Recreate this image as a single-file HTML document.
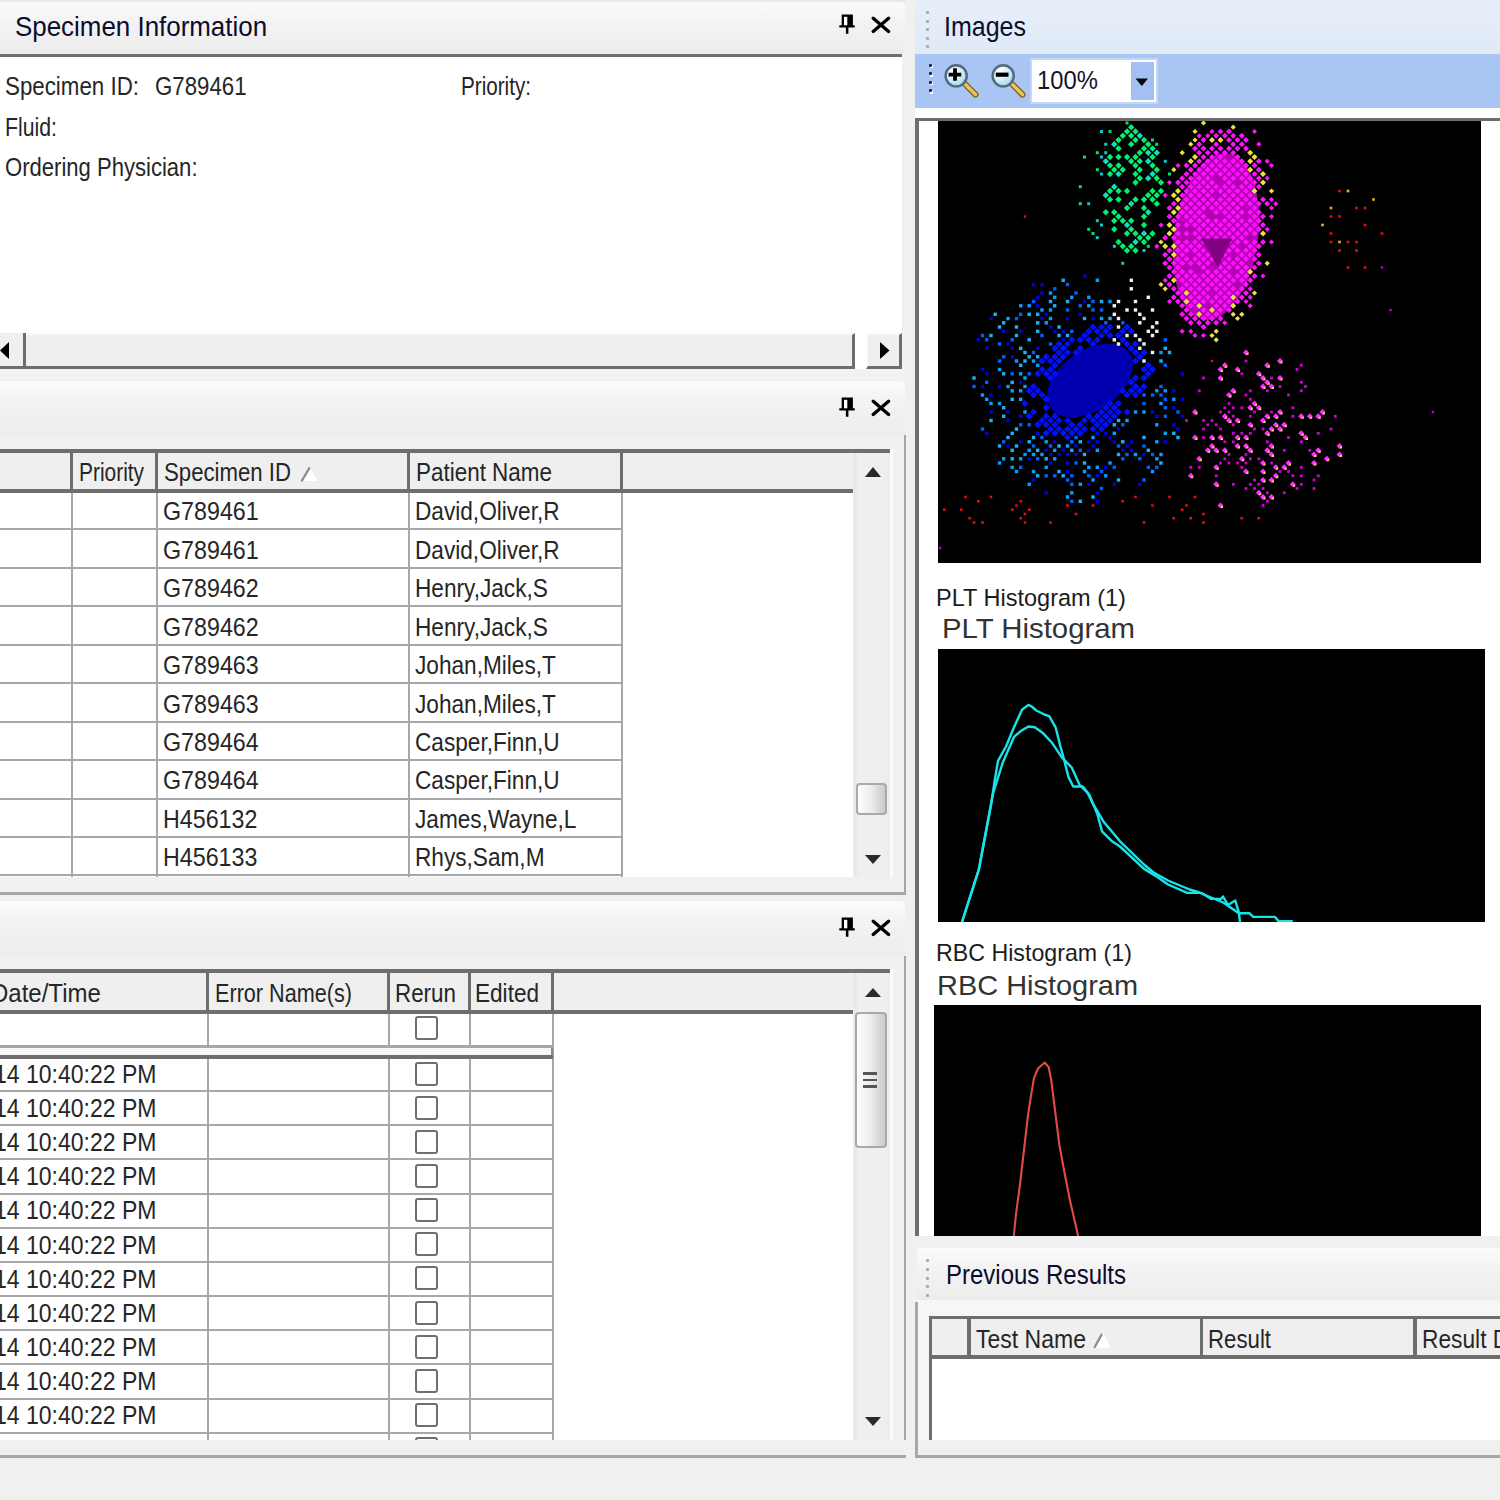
<!DOCTYPE html><html><head><meta charset="utf-8"><style>
html,body{margin:0;padding:0;width:1500px;height:1500px;overflow:hidden;background:#f0f0f0;}
body{position:relative;font-family:"Liberation Sans",sans-serif;}
div,svg,span{position:absolute;}
.t{white-space:nowrap;line-height:1;color:#262626;}
.clip{overflow:hidden;}
</style></head><body>
<div style="left:0px;top:0px;width:905px;height:2px;background:#e9e9e9"></div>
<div style="left:0px;top:2px;width:905px;height:52px;background:linear-gradient(#fbfbfb,#f3f3f3 40%,#ececec);border-top-right-radius:4px;"></div>
<span class="t" style="left:14.50px;top:12.72px;font-size:27.5px;color:#0c0c2c;transform:scaleX(0.9423);transform-origin:0 0;">Specimen Information</span>
<svg style="left:839px;top:14px" width="17" height="21" viewBox="0 0 17 21"><path d="M2.7 0.5H13.9V11.3H15.7V13.6H9.4V19.7H6.9V13.6H0.3V11.3H2.7z" fill="#000"/><rect x="5" y="2.8" width="3.3" height="8.5" fill="#fff"/></svg>
<svg style="left:871px;top:16px" width="20" height="18" viewBox="0 0 20 18"><path d="M2.2 2.2L17.6 15.4M17.6 2.2L2.2 15.4" stroke="#000" stroke-width="3.3" stroke-linecap="round"/></svg>
<div style="left:0px;top:54px;width:902px;height:3px;background:#6e6e6e"></div>
<div style="left:0px;top:57px;width:902px;height:276px;background:#fff"></div>
<span class="t" style="left:5.00px;top:74.34px;font-size:25px;color:#262626;transform:scaleX(0.8926);transform-origin:0 0;">Specimen ID:</span>
<span class="t" style="left:154.50px;top:74.34px;font-size:25px;color:#262626;transform:scaleX(0.8894);transform-origin:0 0;">G789461</span>
<span class="t" style="left:461.00px;top:74.34px;font-size:25px;color:#262626;transform:scaleX(0.8260);transform-origin:0 0;">Priority:</span>
<span class="t" style="left:5.00px;top:114.84px;font-size:25px;color:#262626;transform:scaleX(0.8507);transform-origin:0 0;">Fluid:</span>
<span class="t" style="left:5.40px;top:155.34px;font-size:25px;color:#262626;transform:scaleX(0.8825);transform-origin:0 0;">Ordering Physician:</span>
<div style="left:0px;top:333px;width:902px;height:36px;background:#fff"></div>
<div style="left:0px;top:333px;width:25.5px;height:36px;background:#efefef;border-right:3px solid #6e6e6e;border-bottom:3px solid #6e6e6e;box-sizing:border-box"></div>
<svg style="left:0;top:342px" width="10" height="17"><path d="M0 8.5L9 0V17z" fill="#000"/></svg>
<div style="left:25.5px;top:333px;width:829.0px;height:36px;background:#efefef;border-right:3px solid #6e6e6e;border-bottom:3px solid #6e6e6e;box-sizing:border-box;border-top:2px solid #fafafa"></div>
<div style="left:865.5px;top:333px;width:36.5px;height:36px;background:#efefef;border-right:3px solid #6e6e6e;border-bottom:3px solid #6e6e6e;box-sizing:border-box;border-top:2px solid #fafafa;border-left:2px solid #fafafa"></div>
<svg style="left:880px;top:342px" width="10" height="18"><path d="M0 0L9.5 8.5L0 17z" fill="#000"/></svg>
<div style="left:0px;top:369px;width:905px;height:12px;background:#f2f2f2"></div>
<div style="left:0px;top:381px;width:905px;height:54px;background:linear-gradient(#fbfbfb,#f3f3f3 40%,#ececec);border-top-right-radius:4px;"></div>
<svg style="left:839px;top:397px" width="17" height="21" viewBox="0 0 17 21"><path d="M2.7 0.5H13.9V11.3H15.7V13.6H9.4V19.7H6.9V13.6H0.3V11.3H2.7z" fill="#000"/><rect x="5" y="2.8" width="3.3" height="8.5" fill="#fff"/></svg>
<svg style="left:871px;top:398.5px" width="20" height="18" viewBox="0 0 20 18"><path d="M2.2 2.2L17.6 15.4M17.6 2.2L2.2 15.4" stroke="#000" stroke-width="3.3" stroke-linecap="round"/></svg>
<div style="left:0px;top:435px;width:904px;height:14px;background:#f0f0f0"></div>
<div style="left:904px;top:435px;width:2px;height:459px;background:#a7a7a7"></div>
<div style="left:0px;top:892px;width:906px;height:2.5px;background:#a7a7a7"></div>
<div style="left:0px;top:877px;width:904px;height:15px;background:#f0f0f0"></div>
<div style="left:0px;top:449px;width:890px;height:3.5px;background:#6e6e6e"></div>
<div style="left:890px;top:449px;width:3px;height:428px;background:#fbfbfb"></div>
<div style="left:0px;top:452.5px;width:853px;height:36.5px;background:#efefef"></div>
<div style="left:0px;top:489px;width:853px;height:3.5px;background:#6e6e6e"></div>
<div style="left:0px;top:492.5px;width:853px;height:384.5px;background:#fff"></div>
<div style="left:69.5px;top:452.5px;width:3.0px;height:36.5px;background:#6e6e6e"></div>
<div style="left:155px;top:452.5px;width:3px;height:36.5px;background:#6e6e6e"></div>
<div style="left:407px;top:452.5px;width:3px;height:36.5px;background:#6e6e6e"></div>
<div style="left:620px;top:452.5px;width:3px;height:36.5px;background:#6e6e6e"></div>
<span class="t" style="left:78.60px;top:460.34px;font-size:25px;color:#262626;transform:scaleX(0.8360);transform-origin:0 0;">Priority</span>
<span class="t" style="left:163.60px;top:460.34px;font-size:25px;color:#262626;transform:scaleX(0.8873);transform-origin:0 0;">Specimen ID</span>
<svg style="left:300px;top:466px" width="20" height="17"><path d="M1.7 15L9.8 1.5L17.8 15z" fill="#fff"/><path d="M1.9 14.6L9.2 2.3" stroke="#8e8e8e" stroke-width="2.3" stroke-linecap="round"/></svg>
<span class="t" style="left:416.00px;top:460.34px;font-size:25px;color:#262626;transform:scaleX(0.8977);transform-origin:0 0;">Patient Name</span>
<div style="left:0px;top:528.44px;width:622px;height:2.0px;background:#a7a7a7"></div>
<span class="t" style="left:162.80px;top:499.34px;font-size:25px;color:#262626;transform:scaleX(0.9300);transform-origin:0 0;">G789461</span>
<span class="t" style="left:415.20px;top:499.34px;font-size:25px;color:#262626;transform:scaleX(0.9050);transform-origin:0 0;">David,Oliver,R</span>
<div style="left:0px;top:566.8800000000001px;width:622px;height:2.0px;background:#a7a7a7"></div>
<span class="t" style="left:162.80px;top:537.78px;font-size:25px;color:#262626;transform:scaleX(0.9300);transform-origin:0 0;">G789461</span>
<span class="t" style="left:415.20px;top:537.78px;font-size:25px;color:#262626;transform:scaleX(0.9050);transform-origin:0 0;">David,Oliver,R</span>
<div style="left:0px;top:605.3199999999999px;width:622px;height:2.0px;background:#a7a7a7"></div>
<span class="t" style="left:162.80px;top:576.22px;font-size:25px;color:#262626;transform:scaleX(0.9300);transform-origin:0 0;">G789462</span>
<span class="t" style="left:415.20px;top:576.22px;font-size:25px;color:#262626;transform:scaleX(0.9050);transform-origin:0 0;">Henry,Jack,S</span>
<div style="left:0px;top:643.76px;width:622px;height:2.0px;background:#a7a7a7"></div>
<span class="t" style="left:162.80px;top:614.66px;font-size:25px;color:#262626;transform:scaleX(0.9300);transform-origin:0 0;">G789462</span>
<span class="t" style="left:415.20px;top:614.66px;font-size:25px;color:#262626;transform:scaleX(0.9050);transform-origin:0 0;">Henry,Jack,S</span>
<div style="left:0px;top:682.2px;width:622px;height:2.0px;background:#a7a7a7"></div>
<span class="t" style="left:162.80px;top:653.1px;font-size:25px;color:#262626;transform:scaleX(0.9300);transform-origin:0 0;">G789463</span>
<span class="t" style="left:415.20px;top:653.1px;font-size:25px;color:#262626;transform:scaleX(0.9050);transform-origin:0 0;">Johan,Miles,T</span>
<div style="left:0px;top:720.6400000000001px;width:622px;height:2.0px;background:#a7a7a7"></div>
<span class="t" style="left:162.80px;top:691.54px;font-size:25px;color:#262626;transform:scaleX(0.9300);transform-origin:0 0;">G789463</span>
<span class="t" style="left:415.20px;top:691.54px;font-size:25px;color:#262626;transform:scaleX(0.9050);transform-origin:0 0;">Johan,Miles,T</span>
<div style="left:0px;top:759.0799999999999px;width:622px;height:2.0px;background:#a7a7a7"></div>
<span class="t" style="left:162.80px;top:729.98px;font-size:25px;color:#262626;transform:scaleX(0.9300);transform-origin:0 0;">G789464</span>
<span class="t" style="left:415.20px;top:729.98px;font-size:25px;color:#262626;transform:scaleX(0.9050);transform-origin:0 0;">Casper,Finn,U</span>
<div style="left:0px;top:797.52px;width:622px;height:2.0px;background:#a7a7a7"></div>
<span class="t" style="left:162.80px;top:768.42px;font-size:25px;color:#262626;transform:scaleX(0.9300);transform-origin:0 0;">G789464</span>
<span class="t" style="left:415.20px;top:768.42px;font-size:25px;color:#262626;transform:scaleX(0.9050);transform-origin:0 0;">Casper,Finn,U</span>
<div style="left:0px;top:835.96px;width:622px;height:2.0px;background:#a7a7a7"></div>
<span class="t" style="left:162.80px;top:806.86px;font-size:25px;color:#262626;transform:scaleX(0.9300);transform-origin:0 0;">H456132</span>
<span class="t" style="left:415.20px;top:806.86px;font-size:25px;color:#262626;transform:scaleX(0.9050);transform-origin:0 0;">James,Wayne,L</span>
<div style="left:0px;top:874.4000000000001px;width:622px;height:2.0px;background:#a7a7a7"></div>
<span class="t" style="left:162.80px;top:845.3px;font-size:25px;color:#262626;transform:scaleX(0.9300);transform-origin:0 0;">H456133</span>
<span class="t" style="left:415.20px;top:845.3px;font-size:25px;color:#262626;transform:scaleX(0.9050);transform-origin:0 0;">Rhys,Sam,M</span>
<div style="left:70.5px;top:492.5px;width:2.0px;height:384.5px;background:#a7a7a7"></div>
<div style="left:156px;top:492.5px;width:2px;height:384.5px;background:#a7a7a7"></div>
<div style="left:408px;top:492.5px;width:2px;height:384.5px;background:#a7a7a7"></div>
<div style="left:621px;top:492.5px;width:2px;height:384.5px;background:#a7a7a7"></div>
<div style="left:854px;top:452.5px;width:36px;height:424.5px;background:linear-gradient(90deg,#e6e6e6,#efefef 15%,#efefef 85%,#ebebeb)"></div>
<svg style="left:864px;top:465px" width="18" height="13"><path d="M1 12L9 2L17 12z" fill="#2a2a2a"/></svg>
<div style="left:855.5px;top:783px;width:31.0px;height:32px;background:linear-gradient(90deg,#fdfdfd,#ececec 50%,#c9c9ce);border:2px solid #a9a9a9;border-radius:4px;box-sizing:border-box"></div>
<svg style="left:864px;top:854px" width="18" height="11"><path d="M1 1L17 1L9 10z" fill="#2a2a2a"/></svg>
<div style="left:0px;top:901px;width:905px;height:55px;background:linear-gradient(#fbfbfb,#f3f3f3 40%,#ececec);border-top-right-radius:4px;"></div>
<svg style="left:839px;top:917px" width="17" height="21" viewBox="0 0 17 21"><path d="M2.7 0.5H13.9V11.3H15.7V13.6H9.4V19.7H6.9V13.6H0.3V11.3H2.7z" fill="#000"/><rect x="5" y="2.8" width="3.3" height="8.5" fill="#fff"/></svg>
<svg style="left:871px;top:919px" width="20" height="18" viewBox="0 0 20 18"><path d="M2.2 2.2L17.6 15.4M17.6 2.2L2.2 15.4" stroke="#000" stroke-width="3.3" stroke-linecap="round"/></svg>
<div style="left:0px;top:956px;width:904px;height:13px;background:#f0f0f0"></div>
<div style="left:904px;top:956px;width:2px;height:502px;background:#a7a7a7"></div>
<div style="left:0px;top:969px;width:890px;height:3.5px;background:#6e6e6e"></div>
<div style="left:890px;top:969px;width:3px;height:471px;background:#fbfbfb"></div>
<div style="left:0px;top:972.5px;width:853px;height:37.5px;background:#efefef"></div>
<div style="left:0px;top:1010px;width:853px;height:3.5px;background:#6e6e6e"></div>
<div style="left:0px;top:1013.5px;width:853px;height:426.5px;background:#fff"></div>
<div style="left:206px;top:972.5px;width:3px;height:37.5px;background:#6e6e6e"></div>
<div style="left:386.5px;top:972.5px;width:3.0px;height:37.5px;background:#6e6e6e"></div>
<div style="left:467.5px;top:972.5px;width:3.0px;height:37.5px;background:#6e6e6e"></div>
<div style="left:550.5px;top:972.5px;width:3.0px;height:37.5px;background:#6e6e6e"></div>
<div class="clip" style="left:0;top:972.5px;width:206px;height:40px"><span class="t" style="left:-9px;top:8.84px;font-size:25px;transform:scaleX(0.96);transform-origin:0 0">Date/Time</span></div>
<span class="t" style="left:214.70px;top:981.34px;font-size:25px;color:#262626;transform:scaleX(0.8650);transform-origin:0 0;">Error Name(s)</span>
<span class="t" style="left:394.70px;top:981.34px;font-size:25px;color:#262626;transform:scaleX(0.8954);transform-origin:0 0;">Rerun</span>
<span class="t" style="left:474.70px;top:981.34px;font-size:25px;color:#262626;transform:scaleX(0.9030);transform-origin:0 0;">Edited</span>
<div style="left:415px;top:1016px;width:23px;height:24px;border:2px solid #6f6f6f;border-radius:3px;box-sizing:border-box;background:#fff"></div>
<div style="left:0px;top:1045px;width:553px;height:2.5px;background:#a7a7a7"></div>
<div style="left:207px;top:1013.5px;width:2px;height:426.5px;background:#a7a7a7"></div>
<div style="left:387.5px;top:1013.5px;width:2.0px;height:426.5px;background:#a7a7a7"></div>
<div style="left:468.5px;top:1013.5px;width:2.0px;height:426.5px;background:#a7a7a7"></div>
<div style="left:551.5px;top:1013.5px;width:2.0px;height:426.5px;background:#a7a7a7"></div>
<div style="left:0px;top:1047.5px;width:553px;height:7.5px;background:#f6f6f6;border-right:2px solid #8a8a8a;box-sizing:border-box"></div>
<div style="left:0px;top:1055px;width:553px;height:3.5px;background:#6e6e6e"></div>
<div style="left:0px;top:1090.15px;width:553px;height:2.0px;background:#a7a7a7"></div>
<div style="left:415px;top:1061.5px;width:23px;height:24.0px;border:2px solid #6f6f6f;border-radius:3px;box-sizing:border-box;background:#fff"></div>
<div class="clip" style="left:0;top:1058.5px;width:206px;height:34px"><span class="t" style="left:-6px;top:3.34px;font-size:25px;transform:scaleX(0.92);transform-origin:0 0">14 10:40:22 PM</span></div>
<div style="left:0px;top:1124.3000000000002px;width:553px;height:2.0px;background:#a7a7a7"></div>
<div style="left:415px;top:1095.65px;width:23px;height:24.0px;border:2px solid #6f6f6f;border-radius:3px;box-sizing:border-box;background:#fff"></div>
<div class="clip" style="left:0;top:1092.65px;width:206px;height:34px"><span class="t" style="left:-6px;top:3.34px;font-size:25px;transform:scaleX(0.92);transform-origin:0 0">14 10:40:22 PM</span></div>
<div style="left:0px;top:1158.45px;width:553px;height:2.0px;background:#a7a7a7"></div>
<div style="left:415px;top:1129.8px;width:23px;height:24.0px;border:2px solid #6f6f6f;border-radius:3px;box-sizing:border-box;background:#fff"></div>
<div class="clip" style="left:0;top:1126.8px;width:206px;height:34px"><span class="t" style="left:-6px;top:3.34px;font-size:25px;transform:scaleX(0.92);transform-origin:0 0">14 10:40:22 PM</span></div>
<div style="left:0px;top:1192.6000000000001px;width:553px;height:2.0px;background:#a7a7a7"></div>
<div style="left:415px;top:1163.95px;width:23px;height:24.0px;border:2px solid #6f6f6f;border-radius:3px;box-sizing:border-box;background:#fff"></div>
<div class="clip" style="left:0;top:1160.95px;width:206px;height:34px"><span class="t" style="left:-6px;top:3.34px;font-size:25px;transform:scaleX(0.92);transform-origin:0 0">14 10:40:22 PM</span></div>
<div style="left:0px;top:1226.75px;width:553px;height:2.0px;background:#a7a7a7"></div>
<div style="left:415px;top:1198.1px;width:23px;height:24.0px;border:2px solid #6f6f6f;border-radius:3px;box-sizing:border-box;background:#fff"></div>
<div class="clip" style="left:0;top:1195.1px;width:206px;height:34px"><span class="t" style="left:-6px;top:3.34px;font-size:25px;transform:scaleX(0.92);transform-origin:0 0">14 10:40:22 PM</span></div>
<div style="left:0px;top:1260.9px;width:553px;height:2.0px;background:#a7a7a7"></div>
<div style="left:415px;top:1232.25px;width:23px;height:24.0px;border:2px solid #6f6f6f;border-radius:3px;box-sizing:border-box;background:#fff"></div>
<div class="clip" style="left:0;top:1229.25px;width:206px;height:34px"><span class="t" style="left:-6px;top:3.34px;font-size:25px;transform:scaleX(0.92);transform-origin:0 0">14 10:40:22 PM</span></div>
<div style="left:0px;top:1295.0500000000002px;width:553px;height:2.0px;background:#a7a7a7"></div>
<div style="left:415px;top:1266.4px;width:23px;height:24.0px;border:2px solid #6f6f6f;border-radius:3px;box-sizing:border-box;background:#fff"></div>
<div class="clip" style="left:0;top:1263.4px;width:206px;height:34px"><span class="t" style="left:-6px;top:3.34px;font-size:25px;transform:scaleX(0.92);transform-origin:0 0">14 10:40:22 PM</span></div>
<div style="left:0px;top:1329.2px;width:553px;height:2.0px;background:#a7a7a7"></div>
<div style="left:415px;top:1300.55px;width:23px;height:24.0px;border:2px solid #6f6f6f;border-radius:3px;box-sizing:border-box;background:#fff"></div>
<div class="clip" style="left:0;top:1297.55px;width:206px;height:34px"><span class="t" style="left:-6px;top:3.34px;font-size:25px;transform:scaleX(0.92);transform-origin:0 0">14 10:40:22 PM</span></div>
<div style="left:0px;top:1363.3500000000001px;width:553px;height:2.0px;background:#a7a7a7"></div>
<div style="left:415px;top:1334.7px;width:23px;height:24.0px;border:2px solid #6f6f6f;border-radius:3px;box-sizing:border-box;background:#fff"></div>
<div class="clip" style="left:0;top:1331.7px;width:206px;height:34px"><span class="t" style="left:-6px;top:3.34px;font-size:25px;transform:scaleX(0.92);transform-origin:0 0">14 10:40:22 PM</span></div>
<div style="left:0px;top:1397.5px;width:553px;height:2.0px;background:#a7a7a7"></div>
<div style="left:415px;top:1368.85px;width:23px;height:24.0px;border:2px solid #6f6f6f;border-radius:3px;box-sizing:border-box;background:#fff"></div>
<div class="clip" style="left:0;top:1365.85px;width:206px;height:34px"><span class="t" style="left:-6px;top:3.34px;font-size:25px;transform:scaleX(0.92);transform-origin:0 0">14 10:40:22 PM</span></div>
<div style="left:0px;top:1431.65px;width:553px;height:2.0px;background:#a7a7a7"></div>
<div style="left:415px;top:1403.0px;width:23px;height:24.0px;border:2px solid #6f6f6f;border-radius:3px;box-sizing:border-box;background:#fff"></div>
<div class="clip" style="left:0;top:1400.0px;width:206px;height:34px"><span class="t" style="left:-6px;top:3.34px;font-size:25px;transform:scaleX(0.92);transform-origin:0 0">14 10:40:22 PM</span></div>
<div class="clip" style="left:415px;top:1437.15px;width:23px;height:2.85px"><div style="left:0;top:0;width:23px;height:24px;border:2px solid #6f6f6f;border-radius:3px;box-sizing:border-box"></div></div>
<div class="clip" style="left:0;top:1434.15px;width:206px;height:34px"><span class="t" style="left:-6px;top:3.34px;font-size:25px;transform:scaleX(0.92);transform-origin:0 0">14 10:40:22 PM</span></div>
<div style="left:0px;top:1440px;width:906px;height:15px;background:#f0f0f0"></div>
<div style="left:415px;top:1440px;width:25px;height:16px;background:#f0f0f0"></div>
<div style="left:854px;top:972.5px;width:36px;height:467.5px;background:linear-gradient(90deg,#e6e6e6,#efefef 15%,#efefef 85%,#ebebeb)"></div>
<svg style="left:864px;top:986px" width="18" height="12"><path d="M1 11L9 2L17 11z" fill="#2a2a2a"/></svg>
<div style="left:855px;top:1012px;width:31.5px;height:136px;background:linear-gradient(90deg,#fdfdfd,#ececec 50%,#c9c9ce);border:2px solid #a9a9a9;border-radius:4px;box-sizing:border-box"></div>
<div style="left:863px;top:1072px;width:14px;height:2.5px;background:#555"></div>
<div style="left:863px;top:1078.5px;width:14px;height:2.5px;background:#555"></div>
<div style="left:863px;top:1085px;width:14px;height:2.5px;background:#555"></div>
<svg style="left:864px;top:1416px" width="18" height="11"><path d="M1 1L17 1L9 10z" fill="#2a2a2a"/></svg>
<div style="left:0px;top:1455px;width:906px;height:2.5px;background:#a7a7a7"></div>
<div style="left:906px;top:0px;width:9px;height:1500px;background:#f0f0f0"></div>
<div style="left:914.5px;top:0px;width:585.5px;height:53.5px;background:linear-gradient(#e6eef9,#e0eaf7)"></div>
<div style="left:925.5px;top:11.0px;width:3.0px;height:3.0px;background:#a9a9a9;border-radius:1px"></div>
<div style="left:925.5px;top:19.5px;width:3.0px;height:3.0px;background:#a9a9a9;border-radius:1px"></div>
<div style="left:925.5px;top:28.0px;width:3.0px;height:3.0px;background:#a9a9a9;border-radius:1px"></div>
<div style="left:925.5px;top:36.5px;width:3.0px;height:3.0px;background:#a9a9a9;border-radius:1px"></div>
<div style="left:925.5px;top:45.0px;width:3.0px;height:3.0px;background:#a9a9a9;border-radius:1px"></div>
<span class="t" style="left:944.00px;top:13.22px;font-size:27.5px;color:#0c0c2c;transform:scaleX(0.9091);transform-origin:0 0;">Images</span>
<div style="left:914.5px;top:53.5px;width:585.5px;height:54.5px;background:#a8c5f4"></div>
<div style="left:930px;top:65.3px;width:3px;height:3.0px;background:#fff"></div>
<div style="left:928.5px;top:63.8px;width:3.0px;height:3.0px;background:#10285c;border-radius:1px"></div>
<div style="left:930px;top:73.7px;width:3px;height:3.0px;background:#fff"></div>
<div style="left:928.5px;top:72.2px;width:3.0px;height:3.0px;background:#10285c;border-radius:1px"></div>
<div style="left:930px;top:82.1px;width:3px;height:3.0px;background:#fff"></div>
<div style="left:928.5px;top:80.6px;width:3.0px;height:3.0px;background:#10285c;border-radius:1px"></div>
<div style="left:930px;top:90.5px;width:3px;height:3.0px;background:#fff"></div>
<div style="left:928.5px;top:89px;width:3.0px;height:3px;background:#10285c;border-radius:1px"></div>
<svg style="left:943px;top:62px" width="36" height="36" viewBox="0 0 36 36"><defs><radialGradient id="lg943" cx="0.35" cy="0.3" r="0.75"><stop offset="0" stop-color="#ffffff"/><stop offset="0.5" stop-color="#d6f3fb"/><stop offset="1" stop-color="#9fd0e6"/></radialGradient></defs><path d="M22 22L32.5 32.6" stroke="#7a5a10" stroke-width="6" stroke-linecap="round"/><path d="M22 22L32.5 32.6" stroke="#eac35a" stroke-width="3.6" stroke-linecap="round"/><circle cx="13.2" cy="13.8" r="10.6" fill="url(#lg943)" stroke="#56697a" stroke-width="2.4"/><path d="M5.6 12.7H18.3M12 6.3V18.7" stroke="#000" stroke-width="3.8"/></svg>
<svg style="left:990px;top:62px" width="36" height="36" viewBox="0 0 36 36"><defs><radialGradient id="lg990" cx="0.35" cy="0.3" r="0.75"><stop offset="0" stop-color="#ffffff"/><stop offset="0.5" stop-color="#d6f3fb"/><stop offset="1" stop-color="#9fd0e6"/></radialGradient></defs><path d="M22 22L32.5 32.6" stroke="#7a5a10" stroke-width="6" stroke-linecap="round"/><path d="M22 22L32.5 32.6" stroke="#eac35a" stroke-width="3.6" stroke-linecap="round"/><circle cx="13.2" cy="13.8" r="10.6" fill="url(#lg990)" stroke="#56697a" stroke-width="2.4"/><path d="M5.8 12.7H18.5" stroke="#000" stroke-width="4.2"/></svg>
<div style="left:1030px;top:58px;width:127.5px;height:46px;background:#fff;border:2px solid #c6d7f5;box-sizing:border-box"></div>
<div style="left:1131px;top:62px;width:23px;height:38px;background:#a4c0f2"></div>
<svg style="left:1135px;top:78px" width="14" height="9"><path d="M0.5 0.5H13L6.75 8z" fill="#000"/></svg>
<span class="t" style="left:1037.00px;top:66.99px;font-size:26px;color:#141428;transform:scaleX(0.9165);transform-origin:0 0;">100%</span>
<div style="left:914.5px;top:108px;width:585.5px;height:10px;background:#fdfdfd"></div>
<div style="left:915px;top:118px;width:585px;height:2.5px;background:#6e6e6e"></div>
<div style="left:915px;top:120.5px;width:3.8px;height:1115.5px;background:#6e6e6e"></div>
<div style="left:918.8px;top:120.5px;width:581.2px;height:1115.5px;background:#fff"></div>
<div style="left:938px;top:120.5px;width:542.5px;height:442.0px;background:#000"></div>
<svg style="left:938px;top:120.5px" width="542.5" height="442"><ellipse cx="278.0" cy="115.5" rx="42" ry="84" fill="#e000e0" opacity="0.8" transform="rotate(8 278 115.5)"/><ellipse cx="152.0" cy="259.5" rx="48" ry="30" fill="#0000b0" opacity="1" transform="rotate(-35 152 259.5)"/><rect x="0.8" y="425.8" width="2.4" height="2.4" fill="#c000c0"/><rect x="5.0" y="387.4" width="2.6" height="2.6" fill="#e01010"/><rect x="21.9" y="387.4" width="2.6" height="2.6" fill="#e01010"/><rect x="26.2" y="374.7" width="2.6" height="2.6" fill="#e01010"/><rect x="30.4" y="395.9" width="2.6" height="2.6" fill="#e01010"/><rect x="34.3" y="255.3" width="3.4" height="3.4" fill="#20b0f0"/><rect x="34.3" y="263.8" width="3.4" height="3.4" fill="#0060ff"/><rect x="34.7" y="400.2" width="2.6" height="2.6" fill="#e01010"/><rect x="38.5" y="217.1" width="3.4" height="3.4" fill="#0000e0"/><rect x="39.0" y="378.9" width="2.6" height="2.6" fill="#e01010"/><rect x="42.8" y="212.8" width="3.4" height="3.4" fill="#0060ff"/><rect x="42.8" y="246.8" width="3.4" height="3.4" fill="#0000e0"/><rect x="42.8" y="263.8" width="3.4" height="3.4" fill="#0000e0"/><rect x="42.8" y="272.3" width="3.4" height="3.4" fill="#00a0ff"/><rect x="42.8" y="306.3" width="3.4" height="3.4" fill="#0060ff"/><rect x="43.2" y="400.2" width="2.6" height="2.6" fill="#e01010"/><rect x="47.0" y="217.1" width="3.4" height="3.4" fill="#0060ff"/><rect x="47.0" y="225.6" width="3.4" height="3.4" fill="#0000e0"/><rect x="47.0" y="251.1" width="3.4" height="3.4" fill="#0000e0"/><rect x="47.0" y="259.6" width="3.4" height="3.4" fill="#0060ff"/><rect x="47.0" y="276.6" width="3.4" height="3.4" fill="#00a0ff"/><rect x="47.0" y="310.6" width="3.4" height="3.4" fill="#0000e0"/><rect x="51.3" y="195.8" width="3.4" height="3.4" fill="#0000e0"/><rect x="51.3" y="212.8" width="3.4" height="3.4" fill="#20b0f0"/><rect x="51.3" y="272.3" width="3.4" height="3.4" fill="#0000e0"/><rect x="51.3" y="280.8" width="3.4" height="3.4" fill="#00a0ff"/><rect x="51.3" y="289.3" width="3.4" height="3.4" fill="#0000e0"/><rect x="51.3" y="297.8" width="3.4" height="3.4" fill="#20b0f0"/><rect x="51.7" y="374.7" width="2.6" height="2.6" fill="#e01010"/><rect x="55.5" y="191.6" width="3.4" height="3.4" fill="#20b0f0"/><rect x="59.8" y="204.3" width="3.4" height="3.4" fill="#20b0f0"/><rect x="59.8" y="221.3" width="3.4" height="3.4" fill="#0060ff"/><rect x="59.8" y="238.3" width="3.4" height="3.4" fill="#0060ff"/><rect x="59.8" y="246.8" width="3.4" height="3.4" fill="#00a0ff"/><rect x="59.8" y="263.8" width="3.4" height="3.4" fill="#0000e0"/><rect x="59.8" y="280.8" width="3.4" height="3.4" fill="#00a0ff"/><rect x="59.8" y="323.3" width="3.4" height="3.4" fill="#20b0f0"/><rect x="59.8" y="340.3" width="3.4" height="3.4" fill="#00a0ff"/><rect x="64.0" y="200.1" width="3.4" height="3.4" fill="#20b0f0"/><rect x="64.0" y="208.6" width="3.4" height="3.4" fill="#0000e0"/><rect x="64.0" y="234.1" width="3.4" height="3.4" fill="#0060ff"/><rect x="64.0" y="251.1" width="3.4" height="3.4" fill="#20b0f0"/><rect x="64.0" y="285.1" width="3.4" height="3.4" fill="#20b0f0"/><rect x="64.0" y="293.6" width="3.4" height="3.4" fill="#20b0f0"/><rect x="64.0" y="319.1" width="3.4" height="3.4" fill="#0060ff"/><rect x="64.0" y="336.1" width="3.4" height="3.4" fill="#00a0ff"/><rect x="68.3" y="195.8" width="3.4" height="3.4" fill="#00a0ff"/><rect x="68.3" y="221.3" width="3.4" height="3.4" fill="#0000e0"/><rect x="68.3" y="263.8" width="3.4" height="3.4" fill="#00a0ff"/><rect x="68.3" y="289.3" width="3.4" height="3.4" fill="#0000e0"/><rect x="68.3" y="297.8" width="3.4" height="3.4" fill="#0000e0"/><rect x="68.3" y="314.8" width="3.4" height="3.4" fill="#20b0f0"/><rect x="68.3" y="323.3" width="3.4" height="3.4" fill="#0000e0"/><rect x="72.5" y="217.1" width="3.4" height="3.4" fill="#0060ff"/><rect x="72.5" y="225.6" width="3.4" height="3.4" fill="#0000e0"/><rect x="72.5" y="234.1" width="3.4" height="3.4" fill="#0000e0"/><rect x="72.5" y="251.1" width="3.4" height="3.4" fill="#0060ff"/><rect x="72.5" y="259.6" width="3.4" height="3.4" fill="#20b0f0"/><rect x="72.5" y="268.1" width="3.4" height="3.4" fill="#00a0ff"/><rect x="72.5" y="276.6" width="3.4" height="3.4" fill="#20b0f0"/><rect x="72.5" y="310.6" width="3.4" height="3.4" fill="#20b0f0"/><rect x="72.5" y="327.6" width="3.4" height="3.4" fill="#20b0f0"/><rect x="72.5" y="336.1" width="3.4" height="3.4" fill="#20b0f0"/><rect x="72.5" y="344.6" width="3.4" height="3.4" fill="#00a0ff"/><rect x="73.0" y="387.4" width="2.6" height="2.6" fill="#e01010"/><rect x="76.8" y="195.8" width="3.4" height="3.4" fill="#0060ff"/><rect x="76.8" y="204.3" width="3.4" height="3.4" fill="#20b0f0"/><rect x="76.8" y="212.8" width="3.4" height="3.4" fill="#20b0f0"/><rect x="76.8" y="238.3" width="3.4" height="3.4" fill="#00a0ff"/><rect x="76.8" y="306.3" width="3.4" height="3.4" fill="#20b0f0"/><rect x="76.8" y="323.3" width="3.4" height="3.4" fill="#20b0f0"/><rect x="76.8" y="348.8" width="3.4" height="3.4" fill="#00a0ff"/><rect x="77.2" y="383.2" width="2.6" height="2.6" fill="#e01010"/><rect x="81.0" y="183.1" width="3.4" height="3.4" fill="#00a0ff"/><rect x="81.0" y="191.6" width="3.4" height="3.4" fill="#0060ff"/><rect x="81.0" y="208.6" width="3.4" height="3.4" fill="#0000e0"/><rect x="81.0" y="225.6" width="3.4" height="3.4" fill="#20b0f0"/><rect x="81.0" y="242.6" width="3.4" height="3.4" fill="#20b0f0"/><rect x="81.0" y="251.1" width="3.4" height="3.4" fill="#00a0ff"/><rect x="81.0" y="259.6" width="3.4" height="3.4" fill="#0000e0"/><rect x="81.0" y="268.1" width="3.4" height="3.4" fill="#00a0ff"/><rect x="81.0" y="276.6" width="3.4" height="3.4" fill="#00a0ff"/><rect x="81.0" y="293.6" width="3.4" height="3.4" fill="#0000e0"/><rect x="81.0" y="302.1" width="3.4" height="3.4" fill="#0060ff"/><rect x="81.0" y="319.1" width="3.4" height="3.4" fill="#0000e0"/><rect x="81.0" y="336.1" width="3.4" height="3.4" fill="#00a0ff"/><rect x="81.0" y="344.6" width="3.4" height="3.4" fill="#0060ff"/><rect x="81.5" y="378.9" width="2.6" height="2.6" fill="#e01010"/><rect x="81.5" y="395.9" width="2.6" height="2.6" fill="#e01010"/><rect x="85.8" y="94.3" width="2.4" height="2.4" fill="#e01010"/><rect x="85.3" y="229.8" width="3.4" height="3.4" fill="#20b0f0"/><rect x="85.3" y="238.3" width="3.4" height="3.4" fill="#20b0f0"/><rect x="85.3" y="255.3" width="3.4" height="3.4" fill="#00a0ff"/><rect x="85.3" y="263.8" width="3.4" height="3.4" fill="#00a0ff"/><path d="M87.0 278.9l3.6 3.6l-3.6 3.6l-3.6 -3.6z" fill="#0010ff"/><rect x="85.3" y="289.3" width="3.4" height="3.4" fill="#00a0ff"/><rect x="85.3" y="331.8" width="3.4" height="3.4" fill="#00a0ff"/><rect x="85.7" y="391.7" width="2.6" height="2.6" fill="#e01010"/><rect x="85.7" y="400.2" width="2.6" height="2.6" fill="#e01010"/><rect x="89.5" y="183.1" width="3.4" height="3.4" fill="#00a0ff"/><rect x="89.5" y="191.6" width="3.4" height="3.4" fill="#20b0f0"/><rect x="89.5" y="217.1" width="3.4" height="3.4" fill="#20b0f0"/><rect x="89.5" y="234.1" width="3.4" height="3.4" fill="#20b0f0"/><rect x="89.5" y="251.1" width="3.4" height="3.4" fill="#0060ff"/><path d="M91.2 266.1l3.6 3.6l-3.6 3.6l-3.6 -3.6z" fill="#0010ff"/><path d="M91.2 291.6l3.6 3.6l-3.6 3.6l-3.6 -3.6z" fill="#0010ff"/><rect x="89.5" y="302.1" width="3.4" height="3.4" fill="#0060ff"/><rect x="89.5" y="319.1" width="3.4" height="3.4" fill="#20b0f0"/><rect x="89.5" y="327.6" width="3.4" height="3.4" fill="#00a0ff"/><rect x="89.5" y="336.1" width="3.4" height="3.4" fill="#0000e0"/><rect x="89.5" y="361.6" width="3.4" height="3.4" fill="#00a0ff"/><rect x="90.0" y="387.4" width="2.6" height="2.6" fill="#e01010"/><rect x="93.8" y="161.8" width="3.4" height="3.4" fill="#0000e0"/><rect x="93.8" y="178.8" width="3.4" height="3.4" fill="#0060ff"/><rect x="93.8" y="229.8" width="3.4" height="3.4" fill="#0060ff"/><rect x="93.8" y="238.3" width="3.4" height="3.4" fill="#00a0ff"/><path d="M95.5 261.9l3.6 3.6l-3.6 3.6l-3.6 -3.6z" fill="#0010ff"/><path d="M95.5 270.4l3.6 3.6l-3.6 3.6l-3.6 -3.6z" fill="#0010ff"/><path d="M95.5 287.4l3.6 3.6l-3.6 3.6l-3.6 -3.6z" fill="#0010ff"/><rect x="93.8" y="314.8" width="3.4" height="3.4" fill="#20b0f0"/><rect x="93.8" y="323.3" width="3.4" height="3.4" fill="#0060ff"/><rect x="93.8" y="331.8" width="3.4" height="3.4" fill="#00a0ff"/><rect x="93.8" y="348.8" width="3.4" height="3.4" fill="#00a0ff"/><rect x="93.8" y="357.3" width="3.4" height="3.4" fill="#0000e0"/><rect x="98.0" y="174.6" width="3.4" height="3.4" fill="#0000e0"/><rect x="98.0" y="183.1" width="3.4" height="3.4" fill="#0000e0"/><rect x="98.0" y="191.6" width="3.4" height="3.4" fill="#20b0f0"/><rect x="98.0" y="200.1" width="3.4" height="3.4" fill="#20b0f0"/><rect x="98.0" y="208.6" width="3.4" height="3.4" fill="#20b0f0"/><rect x="98.0" y="225.6" width="3.4" height="3.4" fill="#0000e0"/><rect x="98.0" y="234.1" width="3.4" height="3.4" fill="#20b0f0"/><rect x="98.0" y="242.6" width="3.4" height="3.4" fill="#00a0ff"/><path d="M99.8 249.2l3.6 3.6l-3.6 3.6l-3.6 -3.6z" fill="#0010ff"/><path d="M99.8 266.1l3.6 3.6l-3.6 3.6l-3.6 -3.6z" fill="#0010ff"/><path d="M99.8 300.1l3.6 3.6l-3.6 3.6l-3.6 -3.6z" fill="#0010ff"/><rect x="98.0" y="310.6" width="3.4" height="3.4" fill="#0000e0"/><rect x="98.0" y="327.6" width="3.4" height="3.4" fill="#20b0f0"/><rect x="98.0" y="336.1" width="3.4" height="3.4" fill="#0060ff"/><rect x="98.0" y="353.1" width="3.4" height="3.4" fill="#20b0f0"/><rect x="102.3" y="161.8" width="3.4" height="3.4" fill="#0000e0"/><rect x="102.3" y="170.3" width="3.4" height="3.4" fill="#0000e0"/><rect x="102.3" y="187.3" width="3.4" height="3.4" fill="#00a0ff"/><rect x="102.3" y="195.8" width="3.4" height="3.4" fill="#0000e0"/><rect x="102.3" y="212.8" width="3.4" height="3.4" fill="#0060ff"/><path d="M104.0 236.4l3.6 3.6l-3.6 3.6l-3.6 -3.6z" fill="#0010ff"/><path d="M104.0 244.9l3.6 3.6l-3.6 3.6l-3.6 -3.6z" fill="#0010ff"/><path d="M104.0 270.4l3.6 3.6l-3.6 3.6l-3.6 -3.6z" fill="#0010ff"/><path d="M104.0 295.9l3.6 3.6l-3.6 3.6l-3.6 -3.6z" fill="#0010ff"/><rect x="102.3" y="314.8" width="3.4" height="3.4" fill="#0060ff"/><rect x="102.3" y="331.8" width="3.4" height="3.4" fill="#00a0ff"/><rect x="106.5" y="191.6" width="3.4" height="3.4" fill="#0000e0"/><rect x="106.5" y="200.1" width="3.4" height="3.4" fill="#00a0ff"/><path d="M108.2 232.2l3.6 3.6l-3.6 3.6l-3.6 -3.6z" fill="#0010ff"/><path d="M108.2 249.2l3.6 3.6l-3.6 3.6l-3.6 -3.6z" fill="#0010ff"/><path d="M108.2 274.6l3.6 3.6l-3.6 3.6l-3.6 -3.6z" fill="#0010ff"/><path d="M108.2 283.1l3.6 3.6l-3.6 3.6l-3.6 -3.6z" fill="#0010ff"/><path d="M108.2 291.6l3.6 3.6l-3.6 3.6l-3.6 -3.6z" fill="#0010ff"/><path d="M108.2 300.1l3.6 3.6l-3.6 3.6l-3.6 -3.6z" fill="#0010ff"/><path d="M108.2 308.6l3.6 3.6l-3.6 3.6l-3.6 -3.6z" fill="#0010ff"/><rect x="106.5" y="319.1" width="3.4" height="3.4" fill="#00a0ff"/><rect x="106.5" y="327.6" width="3.4" height="3.4" fill="#0000e0"/><rect x="106.5" y="336.1" width="3.4" height="3.4" fill="#20b0f0"/><rect x="106.5" y="344.6" width="3.4" height="3.4" fill="#00a0ff"/><rect x="106.5" y="353.1" width="3.4" height="3.4" fill="#0060ff"/><rect x="106.5" y="370.1" width="3.4" height="3.4" fill="#0000e0"/><rect x="110.8" y="170.3" width="3.4" height="3.4" fill="#00a0ff"/><rect x="110.8" y="178.8" width="3.4" height="3.4" fill="#20b0f0"/><rect x="110.8" y="187.3" width="3.4" height="3.4" fill="#00a0ff"/><rect x="110.8" y="195.8" width="3.4" height="3.4" fill="#00a0ff"/><rect x="110.8" y="204.3" width="3.4" height="3.4" fill="#0000e0"/><rect x="110.8" y="221.3" width="3.4" height="3.4" fill="#0060ff"/><path d="M112.5 236.4l3.6 3.6l-3.6 3.6l-3.6 -3.6z" fill="#0010ff"/><path d="M112.5 244.9l3.6 3.6l-3.6 3.6l-3.6 -3.6z" fill="#0010ff"/><path d="M112.5 253.4l3.6 3.6l-3.6 3.6l-3.6 -3.6z" fill="#0010ff"/><path d="M112.5 295.9l3.6 3.6l-3.6 3.6l-3.6 -3.6z" fill="#0010ff"/><path d="M112.5 304.4l3.6 3.6l-3.6 3.6l-3.6 -3.6z" fill="#0010ff"/><rect x="110.8" y="323.3" width="3.4" height="3.4" fill="#0060ff"/><rect x="110.8" y="331.8" width="3.4" height="3.4" fill="#0000e0"/><rect x="110.8" y="340.3" width="3.4" height="3.4" fill="#0000e0"/><rect x="111.2" y="400.2" width="2.6" height="2.6" fill="#e01010"/><rect x="115.0" y="166.1" width="3.4" height="3.4" fill="#0060ff"/><rect x="115.0" y="174.6" width="3.4" height="3.4" fill="#00a0ff"/><rect x="115.0" y="183.1" width="3.4" height="3.4" fill="#20b0f0"/><rect x="115.0" y="208.6" width="3.4" height="3.4" fill="#0000e0"/><path d="M116.8 223.7l3.6 3.6l-3.6 3.6l-3.6 -3.6z" fill="#0010ff"/><path d="M116.8 232.2l3.6 3.6l-3.6 3.6l-3.6 -3.6z" fill="#0010ff"/><path d="M116.8 240.7l3.6 3.6l-3.6 3.6l-3.6 -3.6z" fill="#0010ff"/><path d="M116.8 249.2l3.6 3.6l-3.6 3.6l-3.6 -3.6z" fill="#0010ff"/><path d="M116.8 291.6l3.6 3.6l-3.6 3.6l-3.6 -3.6z" fill="#0010ff"/><path d="M116.8 300.1l3.6 3.6l-3.6 3.6l-3.6 -3.6z" fill="#0010ff"/><path d="M116.8 308.6l3.6 3.6l-3.6 3.6l-3.6 -3.6z" fill="#0010ff"/><rect x="115.0" y="319.1" width="3.4" height="3.4" fill="#0000e0"/><rect x="115.0" y="327.6" width="3.4" height="3.4" fill="#00a0ff"/><rect x="115.0" y="336.1" width="3.4" height="3.4" fill="#00a0ff"/><rect x="115.0" y="353.1" width="3.4" height="3.4" fill="#0060ff"/><rect x="119.3" y="204.3" width="3.4" height="3.4" fill="#20b0f0"/><rect x="119.3" y="212.8" width="3.4" height="3.4" fill="#20b0f0"/><path d="M121.0 219.4l3.6 3.6l-3.6 3.6l-3.6 -3.6z" fill="#0010ff"/><path d="M121.0 227.9l3.6 3.6l-3.6 3.6l-3.6 -3.6z" fill="#0010ff"/><path d="M121.0 236.4l3.6 3.6l-3.6 3.6l-3.6 -3.6z" fill="#0010ff"/><path d="M121.0 295.9l3.6 3.6l-3.6 3.6l-3.6 -3.6z" fill="#0010ff"/><path d="M121.0 304.4l3.6 3.6l-3.6 3.6l-3.6 -3.6z" fill="#0010ff"/><rect x="119.3" y="323.3" width="3.4" height="3.4" fill="#20b0f0"/><rect x="119.3" y="331.8" width="3.4" height="3.4" fill="#0000e0"/><rect x="119.3" y="348.8" width="3.4" height="3.4" fill="#20b0f0"/><rect x="123.5" y="157.6" width="3.4" height="3.4" fill="#20b0f0"/><rect x="123.5" y="208.6" width="3.4" height="3.4" fill="#0000e0"/><rect x="123.5" y="217.1" width="3.4" height="3.4" fill="#0000e0"/><path d="M125.2 223.7l3.6 3.6l-3.6 3.6l-3.6 -3.6z" fill="#0010ff"/><path d="M125.2 232.2l3.6 3.6l-3.6 3.6l-3.6 -3.6z" fill="#0010ff"/><path d="M125.2 308.6l3.6 3.6l-3.6 3.6l-3.6 -3.6z" fill="#0010ff"/><rect x="123.5" y="327.6" width="3.4" height="3.4" fill="#0000e0"/><rect x="123.5" y="353.1" width="3.4" height="3.4" fill="#20b0f0"/><rect x="127.8" y="161.8" width="3.4" height="3.4" fill="#0060ff"/><rect x="127.8" y="178.8" width="3.4" height="3.4" fill="#20b0f0"/><rect x="127.8" y="187.3" width="3.4" height="3.4" fill="#0060ff"/><rect x="127.8" y="195.8" width="3.4" height="3.4" fill="#0000e0"/><rect x="127.8" y="212.8" width="3.4" height="3.4" fill="#20b0f0"/><path d="M129.5 219.4l3.6 3.6l-3.6 3.6l-3.6 -3.6z" fill="#0010ff"/><path d="M129.5 227.9l3.6 3.6l-3.6 3.6l-3.6 -3.6z" fill="#0010ff"/><path d="M129.5 295.9l3.6 3.6l-3.6 3.6l-3.6 -3.6z" fill="#0010ff"/><path d="M129.5 304.4l3.6 3.6l-3.6 3.6l-3.6 -3.6z" fill="#0010ff"/><path d="M129.5 312.9l3.6 3.6l-3.6 3.6l-3.6 -3.6z" fill="#0010ff"/><rect x="127.8" y="323.3" width="3.4" height="3.4" fill="#00a0ff"/><rect x="127.8" y="331.8" width="3.4" height="3.4" fill="#0000e0"/><rect x="127.8" y="340.3" width="3.4" height="3.4" fill="#0000e0"/><rect x="127.8" y="348.8" width="3.4" height="3.4" fill="#0000e0"/><rect x="127.8" y="357.3" width="3.4" height="3.4" fill="#0060ff"/><rect x="127.8" y="374.3" width="3.4" height="3.4" fill="#00a0ff"/><rect x="128.2" y="383.2" width="2.6" height="2.6" fill="#e01010"/><rect x="132.1" y="174.6" width="3.4" height="3.4" fill="#00a0ff"/><rect x="132.1" y="208.6" width="3.4" height="3.4" fill="#0060ff"/><path d="M133.8 215.2l3.6 3.6l-3.6 3.6l-3.6 -3.6z" fill="#0010ff"/><path d="M133.8 300.1l3.6 3.6l-3.6 3.6l-3.6 -3.6z" fill="#0010ff"/><path d="M133.8 308.6l3.6 3.6l-3.6 3.6l-3.6 -3.6z" fill="#0010ff"/><rect x="132.1" y="319.1" width="3.4" height="3.4" fill="#0060ff"/><rect x="132.1" y="327.6" width="3.4" height="3.4" fill="#20b0f0"/><rect x="132.1" y="353.1" width="3.4" height="3.4" fill="#0060ff"/><rect x="132.1" y="361.6" width="3.4" height="3.4" fill="#0060ff"/><rect x="132.1" y="370.1" width="3.4" height="3.4" fill="#00a0ff"/><rect x="132.1" y="378.6" width="3.4" height="3.4" fill="#0060ff"/><rect x="136.3" y="170.3" width="3.4" height="3.4" fill="#0060ff"/><path d="M138.0 227.9l3.6 3.6l-3.6 3.6l-3.6 -3.6z" fill="#0010ff"/><path d="M138.0 304.4l3.6 3.6l-3.6 3.6l-3.6 -3.6z" fill="#0010ff"/><rect x="136.3" y="314.8" width="3.4" height="3.4" fill="#0060ff"/><rect x="136.3" y="323.3" width="3.4" height="3.4" fill="#0000e0"/><rect x="136.3" y="331.8" width="3.4" height="3.4" fill="#0000e0"/><rect x="136.3" y="340.3" width="3.4" height="3.4" fill="#0060ff"/><rect x="136.7" y="391.7" width="2.6" height="2.6" fill="#e01010"/><rect x="140.8" y="64.2" width="3" height="3" fill="#00e070"/><rect x="140.8" y="81.2" width="3" height="3" fill="#00e070"/><rect x="140.6" y="183.1" width="3.4" height="3.4" fill="#0060ff"/><rect x="140.6" y="191.6" width="3.4" height="3.4" fill="#0000e0"/><path d="M142.2 215.2l3.6 3.6l-3.6 3.6l-3.6 -3.6z" fill="#0010ff"/><path d="M142.2 223.7l3.6 3.6l-3.6 3.6l-3.6 -3.6z" fill="#0010ff"/><path d="M142.2 300.1l3.6 3.6l-3.6 3.6l-3.6 -3.6z" fill="#0010ff"/><path d="M142.2 308.6l3.6 3.6l-3.6 3.6l-3.6 -3.6z" fill="#0010ff"/><rect x="140.6" y="319.1" width="3.4" height="3.4" fill="#20b0f0"/><rect x="140.6" y="327.6" width="3.4" height="3.4" fill="#0060ff"/><rect x="140.6" y="361.6" width="3.4" height="3.4" fill="#00a0ff"/><rect x="140.6" y="378.6" width="3.4" height="3.4" fill="#20b0f0"/><rect x="145.0" y="34.5" width="3" height="3" fill="#00e070"/><rect x="144.8" y="153.3" width="3.4" height="3.4" fill="#0000e0"/><rect x="144.8" y="178.8" width="3.4" height="3.4" fill="#0000e0"/><rect x="144.8" y="195.8" width="3.4" height="3.4" fill="#20b0f0"/><path d="M146.5 210.9l3.6 3.6l-3.6 3.6l-3.6 -3.6z" fill="#0010ff"/><path d="M146.5 295.9l3.6 3.6l-3.6 3.6l-3.6 -3.6z" fill="#0010ff"/><path d="M146.5 304.4l3.6 3.6l-3.6 3.6l-3.6 -3.6z" fill="#0010ff"/><rect x="144.8" y="331.8" width="3.4" height="3.4" fill="#20b0f0"/><rect x="144.8" y="340.3" width="3.4" height="3.4" fill="#20b0f0"/><rect x="144.8" y="348.8" width="3.4" height="3.4" fill="#00a0ff"/><rect x="149.2" y="81.2" width="3" height="3" fill="#10c8c8"/><rect x="149.2" y="106.8" width="3" height="3" fill="#00e070"/><rect x="149.1" y="174.6" width="3.4" height="3.4" fill="#00a0ff"/><rect x="149.1" y="183.1" width="3.4" height="3.4" fill="#00a0ff"/><path d="M150.8 206.7l3.6 3.6l-3.6 3.6l-3.6 -3.6z" fill="#0010ff"/><path d="M150.8 215.2l3.6 3.6l-3.6 3.6l-3.6 -3.6z" fill="#0010ff"/><path d="M150.8 291.6l3.6 3.6l-3.6 3.6l-3.6 -3.6z" fill="#0010ff"/><rect x="149.1" y="319.1" width="3.4" height="3.4" fill="#0000e0"/><rect x="149.1" y="327.6" width="3.4" height="3.4" fill="#0000e0"/><rect x="149.1" y="344.6" width="3.4" height="3.4" fill="#00a0ff"/><rect x="149.1" y="353.1" width="3.4" height="3.4" fill="#0060ff"/><rect x="149.1" y="361.6" width="3.4" height="3.4" fill="#0000e0"/><rect x="153.5" y="111.0" width="3" height="3" fill="#00e070"/><rect x="153.3" y="178.8" width="3.4" height="3.4" fill="#0060ff"/><rect x="153.3" y="187.3" width="3.4" height="3.4" fill="#0060ff"/><rect x="153.3" y="195.8" width="3.4" height="3.4" fill="#0000e0"/><path d="M155.0 202.4l3.6 3.6l-3.6 3.6l-3.6 -3.6z" fill="#0010ff"/><path d="M155.0 219.4l3.6 3.6l-3.6 3.6l-3.6 -3.6z" fill="#0010ff"/><path d="M155.0 295.9l3.6 3.6l-3.6 3.6l-3.6 -3.6z" fill="#0010ff"/><path d="M155.0 304.4l3.6 3.6l-3.6 3.6l-3.6 -3.6z" fill="#0010ff"/><rect x="153.3" y="314.8" width="3.4" height="3.4" fill="#00a0ff"/><rect x="153.3" y="323.3" width="3.4" height="3.4" fill="#0000e0"/><rect x="153.3" y="357.3" width="3.4" height="3.4" fill="#00a0ff"/><rect x="153.3" y="374.3" width="3.4" height="3.4" fill="#20b0f0"/><rect x="153.7" y="383.2" width="2.6" height="2.6" fill="#e01010"/><rect x="157.8" y="30.2" width="3" height="3" fill="#00e070"/><rect x="157.8" y="47.2" width="3" height="3" fill="#00e070"/><rect x="157.8" y="98.2" width="3" height="3" fill="#10c8c8"/><rect x="157.8" y="115.2" width="3" height="3" fill="#10c8c8"/><rect x="157.6" y="157.6" width="3.4" height="3.4" fill="#00a0ff"/><path d="M159.2 206.7l3.6 3.6l-3.6 3.6l-3.6 -3.6z" fill="#0010ff"/><path d="M159.2 215.2l3.6 3.6l-3.6 3.6l-3.6 -3.6z" fill="#0010ff"/><path d="M159.2 291.6l3.6 3.6l-3.6 3.6l-3.6 -3.6z" fill="#0010ff"/><path d="M159.2 300.1l3.6 3.6l-3.6 3.6l-3.6 -3.6z" fill="#0010ff"/><rect x="157.6" y="310.6" width="3.4" height="3.4" fill="#0000e0"/><rect x="157.6" y="319.1" width="3.4" height="3.4" fill="#0000e0"/><rect x="157.6" y="327.6" width="3.4" height="3.4" fill="#00a0ff"/><rect x="157.6" y="344.6" width="3.4" height="3.4" fill="#00a0ff"/><rect x="157.6" y="353.1" width="3.4" height="3.4" fill="#0000e0"/><rect x="157.6" y="370.1" width="3.4" height="3.4" fill="#0000e0"/><rect x="157.6" y="378.6" width="3.4" height="3.4" fill="#0000e0"/><rect x="162.0" y="9.0" width="3" height="3" fill="#10c8c8"/><rect x="162.0" y="34.5" width="3" height="3" fill="#10c8c8"/><rect x="162.0" y="51.5" width="3" height="3" fill="#10c8c8"/><rect x="162.0" y="102.5" width="3" height="3" fill="#10c8c8"/><rect x="161.8" y="178.8" width="3.4" height="3.4" fill="#20b0f0"/><rect x="161.8" y="187.3" width="3.4" height="3.4" fill="#0060ff"/><rect x="161.8" y="195.8" width="3.4" height="3.4" fill="#00a0ff"/><path d="M163.5 202.4l3.6 3.6l-3.6 3.6l-3.6 -3.6z" fill="#0010ff"/><path d="M163.5 210.9l3.6 3.6l-3.6 3.6l-3.6 -3.6z" fill="#0010ff"/><path d="M163.5 287.4l3.6 3.6l-3.6 3.6l-3.6 -3.6z" fill="#0010ff"/><path d="M163.5 295.9l3.6 3.6l-3.6 3.6l-3.6 -3.6z" fill="#0010ff"/><path d="M163.5 304.4l3.6 3.6l-3.6 3.6l-3.6 -3.6z" fill="#0010ff"/><rect x="161.8" y="348.8" width="3.4" height="3.4" fill="#0060ff"/><rect x="161.8" y="365.8" width="3.4" height="3.4" fill="#0060ff"/><rect x="166.2" y="21.8" width="3" height="3" fill="#10c8c8"/><rect x="166.2" y="30.2" width="3" height="3" fill="#10c8c8"/><path d="M167.8 37.0l3.2 3.2l-3.2 3.2l-3.2 -3.2z" fill="#10e0c0"/><path d="M167.8 71.0l3.2 3.2l-3.2 3.2l-3.2 -3.2z" fill="#10e0c0"/><path d="M167.8 88.0l3.2 3.2l-3.2 3.2l-3.2 -3.2z" fill="#00f070"/><rect x="166.1" y="200.1" width="3.4" height="3.4" fill="#0060ff"/><path d="M167.8 206.7l3.6 3.6l-3.6 3.6l-3.6 -3.6z" fill="#0010ff"/><path d="M167.8 283.1l3.6 3.6l-3.6 3.6l-3.6 -3.6z" fill="#0010ff"/><path d="M167.8 291.6l3.6 3.6l-3.6 3.6l-3.6 -3.6z" fill="#0010ff"/><path d="M167.8 300.1l3.6 3.6l-3.6 3.6l-3.6 -3.6z" fill="#0010ff"/><rect x="166.1" y="310.6" width="3.4" height="3.4" fill="#0000e0"/><rect x="166.1" y="344.6" width="3.4" height="3.4" fill="#0000e0"/><rect x="166.1" y="353.1" width="3.4" height="3.4" fill="#00a0ff"/><rect x="170.5" y="9.0" width="3" height="3" fill="#00e070"/><path d="M172.0 32.8l3.2 3.2l-3.2 3.2l-3.2 -3.2z" fill="#00f070"/><path d="M172.0 41.3l3.2 3.2l-3.2 3.2l-3.2 -3.2z" fill="#00f070"/><path d="M172.0 49.8l3.2 3.2l-3.2 3.2l-3.2 -3.2z" fill="#00f070"/><path d="M172.0 66.8l3.2 3.2l-3.2 3.2l-3.2 -3.2z" fill="#00f070"/><path d="M172.0 75.3l3.2 3.2l-3.2 3.2l-3.2 -3.2z" fill="#00f070"/><rect x="170.3" y="178.8" width="3.4" height="3.4" fill="#00a0ff"/><rect x="170.3" y="195.8" width="3.4" height="3.4" fill="#20b0f0"/><path d="M172.0 202.4l3.6 3.6l-3.6 3.6l-3.6 -3.6z" fill="#0010ff"/><path d="M172.0 210.9l3.6 3.6l-3.6 3.6l-3.6 -3.6z" fill="#0010ff"/><path d="M172.0 278.9l3.6 3.6l-3.6 3.6l-3.6 -3.6z" fill="#0010ff"/><path d="M172.0 287.4l3.6 3.6l-3.6 3.6l-3.6 -3.6z" fill="#0010ff"/><path d="M172.0 295.9l3.6 3.6l-3.6 3.6l-3.6 -3.6z" fill="#0010ff"/><rect x="170.3" y="314.8" width="3.4" height="3.4" fill="#0000e0"/><rect x="170.3" y="340.3" width="3.4" height="3.4" fill="#00a0ff"/><path d="M176.2 20.1l3.2 3.2l-3.2 3.2l-3.2 -3.2z" fill="#10e0c0"/><path d="M176.2 45.5l3.2 3.2l-3.2 3.2l-3.2 -3.2z" fill="#00f070"/><path d="M176.2 62.5l3.2 3.2l-3.2 3.2l-3.2 -3.2z" fill="#10e0c0"/><path d="M176.2 88.0l3.2 3.2l-3.2 3.2l-3.2 -3.2z" fill="#00f070"/><path d="M176.2 96.5l3.2 3.2l-3.2 3.2l-3.2 -3.2z" fill="#00f070"/><path d="M176.2 105.0l3.2 3.2l-3.2 3.2l-3.2 -3.2z" fill="#00f070"/><rect x="174.8" y="123.8" width="3" height="3" fill="#10c8c8"/><rect x="174.6" y="183.1" width="3.4" height="3.4" fill="#f0f0f0"/><rect x="174.6" y="191.6" width="3.4" height="3.4" fill="#f0f0f0"/><rect x="174.6" y="217.1" width="3.4" height="3.4" fill="#f0f0f0"/><path d="M176.2 283.1l3.6 3.6l-3.6 3.6l-3.6 -3.6z" fill="#0010ff"/><path d="M176.2 291.6l3.6 3.6l-3.6 3.6l-3.6 -3.6z" fill="#0010ff"/><rect x="174.6" y="302.1" width="3.4" height="3.4" fill="#20b0f0"/><rect x="174.6" y="310.6" width="3.4" height="3.4" fill="#00a0ff"/><rect x="174.6" y="319.1" width="3.4" height="3.4" fill="#0000e0"/><rect x="174.6" y="344.6" width="3.4" height="3.4" fill="#0060ff"/><rect x="174.6" y="361.6" width="3.4" height="3.4" fill="#0000e0"/><path d="M180.5 15.8l3.2 3.2l-3.2 3.2l-3.2 -3.2z" fill="#00f070"/><path d="M180.5 24.3l3.2 3.2l-3.2 3.2l-3.2 -3.2z" fill="#00f070"/><path d="M180.5 32.8l3.2 3.2l-3.2 3.2l-3.2 -3.2z" fill="#00f070"/><path d="M180.5 41.3l3.2 3.2l-3.2 3.2l-3.2 -3.2z" fill="#00f070"/><path d="M180.5 49.8l3.2 3.2l-3.2 3.2l-3.2 -3.2z" fill="#10e0c0"/><path d="M180.5 66.8l3.2 3.2l-3.2 3.2l-3.2 -3.2z" fill="#00f070"/><path d="M180.5 75.3l3.2 3.2l-3.2 3.2l-3.2 -3.2z" fill="#00f070"/><path d="M180.5 92.3l3.2 3.2l-3.2 3.2l-3.2 -3.2z" fill="#00f070"/><path d="M180.5 117.8l3.2 3.2l-3.2 3.2l-3.2 -3.2z" fill="#00f070"/><rect x="178.8" y="178.8" width="3.4" height="3.4" fill="#f0f0f0"/><rect x="178.8" y="195.8" width="3.4" height="3.4" fill="#f0f0f0"/><rect x="178.8" y="204.3" width="3.4" height="3.4" fill="#f0f0f0"/><path d="M180.5 210.9l3.6 3.6l-3.6 3.6l-3.6 -3.6z" fill="#0010ff"/><rect x="178.8" y="221.3" width="3.4" height="3.4" fill="#f0f0f0"/><path d="M180.5 278.9l3.6 3.6l-3.6 3.6l-3.6 -3.6z" fill="#0010ff"/><path d="M180.5 287.4l3.6 3.6l-3.6 3.6l-3.6 -3.6z" fill="#0010ff"/><rect x="178.8" y="297.8" width="3.4" height="3.4" fill="#20b0f0"/><rect x="178.8" y="306.3" width="3.4" height="3.4" fill="#0000e0"/><rect x="178.8" y="323.3" width="3.4" height="3.4" fill="#0060ff"/><rect x="178.8" y="331.8" width="3.4" height="3.4" fill="#20b0f0"/><rect x="178.8" y="357.3" width="3.4" height="3.4" fill="#20b0f0"/><path d="M184.8 11.6l3.2 3.2l-3.2 3.2l-3.2 -3.2z" fill="#00f070"/><path d="M184.8 45.5l3.2 3.2l-3.2 3.2l-3.2 -3.2z" fill="#00f070"/><path d="M184.8 96.5l3.2 3.2l-3.2 3.2l-3.2 -3.2z" fill="#00f070"/><path d="M184.8 122.0l3.2 3.2l-3.2 3.2l-3.2 -3.2z" fill="#00f070"/><rect x="183.2" y="140.8" width="3" height="3" fill="#10c8c8"/><rect x="183.1" y="200.1" width="3.4" height="3.4" fill="#0060ff"/><path d="M184.8 206.7l3.6 3.6l-3.6 3.6l-3.6 -3.6z" fill="#0010ff"/><path d="M184.8 215.2l3.6 3.6l-3.6 3.6l-3.6 -3.6z" fill="#0010ff"/><path d="M184.8 266.1l3.6 3.6l-3.6 3.6l-3.6 -3.6z" fill="#0010ff"/><rect x="183.1" y="302.1" width="3.4" height="3.4" fill="#0060ff"/><rect x="183.1" y="319.1" width="3.4" height="3.4" fill="#20b0f0"/><rect x="183.1" y="327.6" width="3.4" height="3.4" fill="#0000e0"/><rect x="183.1" y="336.1" width="3.4" height="3.4" fill="#0060ff"/><rect x="183.4" y="378.9" width="2.6" height="2.6" fill="#e01010"/><rect x="187.5" y="0.5" width="3" height="3" fill="#00e070"/><path d="M189.0 7.3l3.2 3.2l-3.2 3.2l-3.2 -3.2z" fill="#00f070"/><path d="M189.0 32.8l3.2 3.2l-3.2 3.2l-3.2 -3.2z" fill="#00f070"/><path d="M189.0 66.8l3.2 3.2l-3.2 3.2l-3.2 -3.2z" fill="#00f070"/><path d="M189.0 83.8l3.2 3.2l-3.2 3.2l-3.2 -3.2z" fill="#00f070"/><path d="M189.0 100.8l3.2 3.2l-3.2 3.2l-3.2 -3.2z" fill="#10e0c0"/><path d="M189.0 109.3l3.2 3.2l-3.2 3.2l-3.2 -3.2z" fill="#00f070"/><path d="M189.0 126.3l3.2 3.2l-3.2 3.2l-3.2 -3.2z" fill="#00f070"/><rect x="187.3" y="187.3" width="3.4" height="3.4" fill="#f0f0f0"/><path d="M189.0 202.4l3.6 3.6l-3.6 3.6l-3.6 -3.6z" fill="#0010ff"/><rect x="187.3" y="212.8" width="3.4" height="3.4" fill="#f0f0f0"/><path d="M189.0 219.4l3.6 3.6l-3.6 3.6l-3.6 -3.6z" fill="#0010ff"/><path d="M189.0 270.4l3.6 3.6l-3.6 3.6l-3.6 -3.6z" fill="#0010ff"/><path d="M189.0 287.4l3.6 3.6l-3.6 3.6l-3.6 -3.6z" fill="#0010ff"/><rect x="187.3" y="297.8" width="3.4" height="3.4" fill="#00a0ff"/><rect x="187.3" y="323.3" width="3.4" height="3.4" fill="#0000e0"/><rect x="187.3" y="331.8" width="3.4" height="3.4" fill="#0060ff"/><path d="M193.2 3.0l3.2 3.2l-3.2 3.2l-3.2 -3.2z" fill="#00f070"/><path d="M193.2 11.6l3.2 3.2l-3.2 3.2l-3.2 -3.2z" fill="#00f070"/><path d="M193.2 20.1l3.2 3.2l-3.2 3.2l-3.2 -3.2z" fill="#00f070"/><path d="M193.2 37.0l3.2 3.2l-3.2 3.2l-3.2 -3.2z" fill="#00f070"/><path d="M193.2 79.5l3.2 3.2l-3.2 3.2l-3.2 -3.2z" fill="#10e0c0"/><path d="M193.2 96.5l3.2 3.2l-3.2 3.2l-3.2 -3.2z" fill="#00f070"/><path d="M193.2 105.0l3.2 3.2l-3.2 3.2l-3.2 -3.2z" fill="#00f070"/><path d="M193.2 122.0l3.2 3.2l-3.2 3.2l-3.2 -3.2z" fill="#00f070"/><rect x="191.6" y="157.6" width="3.4" height="3.4" fill="#f0f0f0"/><rect x="191.6" y="166.1" width="3.4" height="3.4" fill="#f0f0f0"/><path d="M193.2 206.7l3.6 3.6l-3.6 3.6l-3.6 -3.6z" fill="#0010ff"/><path d="M193.2 223.7l3.6 3.6l-3.6 3.6l-3.6 -3.6z" fill="#0010ff"/><path d="M193.2 257.6l3.6 3.6l-3.6 3.6l-3.6 -3.6z" fill="#0010ff"/><path d="M193.2 266.1l3.6 3.6l-3.6 3.6l-3.6 -3.6z" fill="#0010ff"/><rect x="191.6" y="319.1" width="3.4" height="3.4" fill="#0000e0"/><rect x="191.6" y="327.6" width="3.4" height="3.4" fill="#0000e0"/><path d="M197.5 7.3l3.2 3.2l-3.2 3.2l-3.2 -3.2z" fill="#00f070"/><path d="M197.5 15.8l3.2 3.2l-3.2 3.2l-3.2 -3.2z" fill="#00f070"/><path d="M197.5 32.8l3.2 3.2l-3.2 3.2l-3.2 -3.2z" fill="#00f070"/><path d="M197.5 41.3l3.2 3.2l-3.2 3.2l-3.2 -3.2z" fill="#00f070"/><path d="M197.5 49.8l3.2 3.2l-3.2 3.2l-3.2 -3.2z" fill="#00f070"/><path d="M197.5 58.3l3.2 3.2l-3.2 3.2l-3.2 -3.2z" fill="#00f070"/><path d="M197.5 75.3l3.2 3.2l-3.2 3.2l-3.2 -3.2z" fill="#00f070"/><path d="M197.5 109.3l3.2 3.2l-3.2 3.2l-3.2 -3.2z" fill="#00f070"/><path d="M197.5 117.8l3.2 3.2l-3.2 3.2l-3.2 -3.2z" fill="#10e0c0"/><path d="M197.5 126.3l3.2 3.2l-3.2 3.2l-3.2 -3.2z" fill="#00f070"/><rect x="195.8" y="178.8" width="3.4" height="3.4" fill="#f0f0f0"/><rect x="195.8" y="187.3" width="3.4" height="3.4" fill="#f0f0f0"/><rect x="195.8" y="212.8" width="3.4" height="3.4" fill="#f0f0f0"/><path d="M197.5 219.4l3.6 3.6l-3.6 3.6l-3.6 -3.6z" fill="#0010ff"/><path d="M197.5 227.9l3.6 3.6l-3.6 3.6l-3.6 -3.6z" fill="#0010ff"/><path d="M197.5 236.4l3.6 3.6l-3.6 3.6l-3.6 -3.6z" fill="#0010ff"/><path d="M197.5 253.4l3.6 3.6l-3.6 3.6l-3.6 -3.6z" fill="#0010ff"/><path d="M197.5 261.9l3.6 3.6l-3.6 3.6l-3.6 -3.6z" fill="#0010ff"/><path d="M197.5 270.4l3.6 3.6l-3.6 3.6l-3.6 -3.6z" fill="#0010ff"/><rect x="195.8" y="289.3" width="3.4" height="3.4" fill="#00a0ff"/><rect x="195.8" y="331.8" width="3.4" height="3.4" fill="#00a0ff"/><rect x="196.2" y="374.7" width="2.6" height="2.6" fill="#e01010"/><path d="M201.8 11.6l3.2 3.2l-3.2 3.2l-3.2 -3.2z" fill="#10e0c0"/><path d="M201.8 28.6l3.2 3.2l-3.2 3.2l-3.2 -3.2z" fill="#00f070"/><path d="M201.8 37.0l3.2 3.2l-3.2 3.2l-3.2 -3.2z" fill="#00f070"/><path d="M201.8 45.5l3.2 3.2l-3.2 3.2l-3.2 -3.2z" fill="#00f070"/><path d="M201.8 54.0l3.2 3.2l-3.2 3.2l-3.2 -3.2z" fill="#00f070"/><path d="M201.8 113.5l3.2 3.2l-3.2 3.2l-3.2 -3.2z" fill="#00f070"/><rect x="200.1" y="191.6" width="3.4" height="3.4" fill="#f0f0f0"/><rect x="200.1" y="200.1" width="3.4" height="3.4" fill="#f0f0f0"/><rect x="200.1" y="217.1" width="3.4" height="3.4" fill="#f0f0f0"/><rect x="200.1" y="225.6" width="3.4" height="3.4" fill="#f0f0f0"/><path d="M201.8 232.2l3.6 3.6l-3.6 3.6l-3.6 -3.6z" fill="#0010ff"/><path d="M201.8 266.1l3.6 3.6l-3.6 3.6l-3.6 -3.6z" fill="#0010ff"/><rect x="200.1" y="336.1" width="3.4" height="3.4" fill="#0060ff"/><rect x="200.1" y="361.6" width="3.4" height="3.4" fill="#0000e0"/><path d="M206.0 15.8l3.2 3.2l-3.2 3.2l-3.2 -3.2z" fill="#00f070"/><path d="M206.0 24.3l3.2 3.2l-3.2 3.2l-3.2 -3.2z" fill="#00f070"/><path d="M206.0 75.3l3.2 3.2l-3.2 3.2l-3.2 -3.2z" fill="#00f070"/><path d="M206.0 83.8l3.2 3.2l-3.2 3.2l-3.2 -3.2z" fill="#00f070"/><path d="M206.0 92.3l3.2 3.2l-3.2 3.2l-3.2 -3.2z" fill="#00f070"/><path d="M206.0 100.8l3.2 3.2l-3.2 3.2l-3.2 -3.2z" fill="#00f070"/><path d="M206.0 109.3l3.2 3.2l-3.2 3.2l-3.2 -3.2z" fill="#10e0c0"/><path d="M206.0 117.8l3.2 3.2l-3.2 3.2l-3.2 -3.2z" fill="#00f070"/><rect x="204.5" y="128.0" width="3" height="3" fill="#10c8c8"/><rect x="204.3" y="195.8" width="3.4" height="3.4" fill="#f0f0f0"/><rect x="204.3" y="221.3" width="3.4" height="3.4" fill="#f0f0f0"/><path d="M206.0 227.9l3.6 3.6l-3.6 3.6l-3.6 -3.6z" fill="#0010ff"/><rect x="204.3" y="238.3" width="3.4" height="3.4" fill="#f0f0f0"/><path d="M206.0 244.9l3.6 3.6l-3.6 3.6l-3.6 -3.6z" fill="#0010ff"/><path d="M206.0 253.4l3.6 3.6l-3.6 3.6l-3.6 -3.6z" fill="#0010ff"/><path d="M206.0 261.9l3.6 3.6l-3.6 3.6l-3.6 -3.6z" fill="#0010ff"/><rect x="204.3" y="272.3" width="3.4" height="3.4" fill="#0060ff"/><rect x="204.3" y="280.8" width="3.4" height="3.4" fill="#0060ff"/><rect x="204.3" y="289.3" width="3.4" height="3.4" fill="#00a0ff"/><rect x="204.3" y="314.8" width="3.4" height="3.4" fill="#20b0f0"/><rect x="204.3" y="323.3" width="3.4" height="3.4" fill="#0060ff"/><rect x="204.3" y="331.8" width="3.4" height="3.4" fill="#0000e0"/><rect x="204.3" y="357.3" width="3.4" height="3.4" fill="#0060ff"/><rect x="204.7" y="400.2" width="2.6" height="2.6" fill="#e01010"/><path d="M210.2 20.1l3.2 3.2l-3.2 3.2l-3.2 -3.2z" fill="#00f070"/><path d="M210.2 28.6l3.2 3.2l-3.2 3.2l-3.2 -3.2z" fill="#10e0c0"/><path d="M210.2 37.0l3.2 3.2l-3.2 3.2l-3.2 -3.2z" fill="#10e0c0"/><path d="M210.2 54.0l3.2 3.2l-3.2 3.2l-3.2 -3.2z" fill="#10e0c0"/><path d="M210.2 71.0l3.2 3.2l-3.2 3.2l-3.2 -3.2z" fill="#00f070"/><path d="M210.2 88.0l3.2 3.2l-3.2 3.2l-3.2 -3.2z" fill="#10e0c0"/><path d="M210.2 113.5l3.2 3.2l-3.2 3.2l-3.2 -3.2z" fill="#00f070"/><rect x="208.8" y="123.8" width="3" height="3" fill="#00e070"/><rect x="208.6" y="174.6" width="3.4" height="3.4" fill="#f0f0f0"/><rect x="208.6" y="208.6" width="3.4" height="3.4" fill="#f0f0f0"/><path d="M210.2 240.7l3.6 3.6l-3.6 3.6l-3.6 -3.6z" fill="#0010ff"/><path d="M210.2 249.2l3.6 3.6l-3.6 3.6l-3.6 -3.6z" fill="#0010ff"/><rect x="208.6" y="327.6" width="3.4" height="3.4" fill="#20b0f0"/><rect x="208.6" y="344.6" width="3.4" height="3.4" fill="#0060ff"/><rect x="213.0" y="17.5" width="3" height="3" fill="#00e070"/><path d="M214.5 24.3l3.2 3.2l-3.2 3.2l-3.2 -3.2z" fill="#00f070"/><path d="M214.5 32.8l3.2 3.2l-3.2 3.2l-3.2 -3.2z" fill="#00f070"/><path d="M214.5 41.3l3.2 3.2l-3.2 3.2l-3.2 -3.2z" fill="#00f070"/><path d="M214.5 49.8l3.2 3.2l-3.2 3.2l-3.2 -3.2z" fill="#10e0c0"/><path d="M214.5 66.8l3.2 3.2l-3.2 3.2l-3.2 -3.2z" fill="#00f070"/><path d="M214.5 75.3l3.2 3.2l-3.2 3.2l-3.2 -3.2z" fill="#00f070"/><path d="M214.5 109.3l3.2 3.2l-3.2 3.2l-3.2 -3.2z" fill="#00f070"/><rect x="212.8" y="187.3" width="3.4" height="3.4" fill="#f0f0f0"/><rect x="212.8" y="204.3" width="3.4" height="3.4" fill="#f0f0f0"/><rect x="212.8" y="212.8" width="3.4" height="3.4" fill="#f0f0f0"/><rect x="212.8" y="229.8" width="3.4" height="3.4" fill="#f0f0f0"/><path d="M214.5 244.9l3.6 3.6l-3.6 3.6l-3.6 -3.6z" fill="#0010ff"/><rect x="212.8" y="272.3" width="3.4" height="3.4" fill="#0060ff"/><rect x="212.8" y="289.3" width="3.4" height="3.4" fill="#0000e0"/><rect x="212.8" y="331.8" width="3.4" height="3.4" fill="#0060ff"/><rect x="212.8" y="348.8" width="3.4" height="3.4" fill="#00a0ff"/><rect x="213.2" y="383.2" width="2.6" height="2.6" fill="#e01010"/><rect x="217.2" y="21.8" width="3" height="3" fill="#00e070"/><path d="M218.8 28.6l3.2 3.2l-3.2 3.2l-3.2 -3.2z" fill="#10e0c0"/><path d="M218.8 45.5l3.2 3.2l-3.2 3.2l-3.2 -3.2z" fill="#00f070"/><path d="M218.8 54.0l3.2 3.2l-3.2 3.2l-3.2 -3.2z" fill="#00f070"/><path d="M218.8 71.0l3.2 3.2l-3.2 3.2l-3.2 -3.2z" fill="#00f070"/><path d="M218.8 79.5l3.2 3.2l-3.2 3.2l-3.2 -3.2z" fill="#00f070"/><path d="M218.8 122.7l2.6 2.6l-2.6 2.6l-2.6 -2.6z" fill="#ff10ff"/><rect x="217.1" y="200.1" width="3.4" height="3.4" fill="#f0f0f0"/><rect x="217.1" y="208.6" width="3.4" height="3.4" fill="#f0f0f0"/><rect x="217.1" y="268.1" width="3.4" height="3.4" fill="#00a0ff"/><rect x="217.1" y="293.6" width="3.4" height="3.4" fill="#0000e0"/><rect x="217.1" y="302.1" width="3.4" height="3.4" fill="#00a0ff"/><rect x="217.1" y="319.1" width="3.4" height="3.4" fill="#00a0ff"/><rect x="217.1" y="336.1" width="3.4" height="3.4" fill="#00a0ff"/><rect x="217.1" y="344.6" width="3.4" height="3.4" fill="#0060ff"/><path d="M223.0 58.3l3.2 3.2l-3.2 3.2l-3.2 -3.2z" fill="#00f070"/><path d="M223.0 66.8l3.2 3.2l-3.2 3.2l-3.2 -3.2z" fill="#00f070"/><path d="M223.0 101.4l2.6 2.6l-2.6 2.6l-2.6 -2.6z" fill="#ff10ff"/><path d="M223.0 118.4l2.6 2.6l-2.6 2.6l-2.6 -2.6z" fill="#f0e040"/><path d="M223.0 160.9l2.6 2.6l-2.6 2.6l-2.6 -2.6z" fill="#f0e040"/><rect x="221.3" y="229.8" width="3.4" height="3.4" fill="#00a0ff"/><rect x="221.3" y="238.3" width="3.4" height="3.4" fill="#20b0f0"/><rect x="221.3" y="263.8" width="3.4" height="3.4" fill="#0060ff"/><rect x="221.3" y="272.3" width="3.4" height="3.4" fill="#0060ff"/><rect x="221.3" y="280.8" width="3.4" height="3.4" fill="#00a0ff"/><rect x="221.3" y="331.8" width="3.4" height="3.4" fill="#00a0ff"/><rect x="221.3" y="340.3" width="3.4" height="3.4" fill="#20b0f0"/><rect x="225.8" y="38.8" width="3" height="3" fill="#10c8c8"/><path d="M227.2 71.7l2.6 2.6l-2.6 2.6l-2.6 -2.6z" fill="#ff10ff"/><path d="M227.2 113.8l3.0 3.0l-3.0 3.0l-3.0 -3.0z" fill="#ff10ff"/><path d="M227.2 122.2l3.0 3.0l-3.0 3.0l-3.0 -3.0z" fill="#f0e040"/><path d="M227.2 130.8l3.0 3.0l-3.0 3.0l-3.0 -3.0z" fill="#ff10ff"/><path d="M227.2 139.2l3.0 3.0l-3.0 3.0l-3.0 -3.0z" fill="#ff10ff"/><path d="M227.2 156.7l2.6 2.6l-2.6 2.6l-2.6 -2.6z" fill="#ff10ff"/><path d="M227.2 165.2l2.6 2.6l-2.6 2.6l-2.6 -2.6z" fill="#f0e040"/><rect x="225.6" y="217.1" width="3.4" height="3.4" fill="#0060ff"/><rect x="225.6" y="225.6" width="3.4" height="3.4" fill="#20b0f0"/><rect x="225.6" y="242.6" width="3.4" height="3.4" fill="#0060ff"/><rect x="225.6" y="268.1" width="3.4" height="3.4" fill="#00a0ff"/><rect x="225.6" y="276.6" width="3.4" height="3.4" fill="#0060ff"/><rect x="225.6" y="285.1" width="3.4" height="3.4" fill="#0060ff"/><rect x="225.6" y="293.6" width="3.4" height="3.4" fill="#0060ff"/><rect x="225.6" y="310.6" width="3.4" height="3.4" fill="#00a0ff"/><rect x="225.6" y="319.1" width="3.4" height="3.4" fill="#0000e0"/><rect x="230.0" y="51.5" width="3" height="3" fill="#00e070"/><path d="M231.5 58.9l2.6 2.6l-2.6 2.6l-2.6 -2.6z" fill="#ff10ff"/><path d="M231.5 84.0l3.0 3.0l-3.0 3.0l-3.0 -3.0z" fill="#ff10ff"/><path d="M231.5 92.5l3.0 3.0l-3.0 3.0l-3.0 -3.0z" fill="#ff10ff"/><path d="M231.5 101.0l3.0 3.0l-3.0 3.0l-3.0 -3.0z" fill="#f0e040"/><path d="M231.5 109.5l3.0 3.0l-3.0 3.0l-3.0 -3.0z" fill="#f0e040"/><path d="M231.5 126.5l3.0 3.0l-3.0 3.0l-3.0 -3.0z" fill="#ff10ff"/><path d="M231.5 135.0l3.0 3.0l-3.0 3.0l-3.0 -3.0z" fill="#ff10ff"/><path d="M231.5 143.5l3.0 3.0l-3.0 3.0l-3.0 -3.0z" fill="#ff10ff"/><path d="M231.5 152.0l3.0 3.0l-3.0 3.0l-3.0 -3.0z" fill="#ff10ff"/><path d="M231.5 160.5l3.0 3.0l-3.0 3.0l-3.0 -3.0z" fill="#ff10ff"/><path d="M231.5 177.9l2.6 2.6l-2.6 2.6l-2.6 -2.6z" fill="#ff10ff"/><rect x="229.8" y="229.8" width="3.4" height="3.4" fill="#20b0f0"/><rect x="230.2" y="374.7" width="2.6" height="2.6" fill="#e01010"/><path d="M235.8 46.1l2.6 2.6l-2.6 2.6l-2.6 -2.6z" fill="#f0e040"/><path d="M235.8 71.2l3.0 3.0l-3.0 3.0l-3.0 -3.0z" fill="#f0e040"/><path d="M235.8 79.8l3.0 3.0l-3.0 3.0l-3.0 -3.0z" fill="#ff10ff"/><path d="M235.8 88.2l3.0 3.0l-3.0 3.0l-3.0 -3.0z" fill="#f0e040"/><path d="M235.8 96.8l3.0 3.0l-3.0 3.0l-3.0 -3.0z" fill="#ff10ff"/><path d="M235.8 105.2l3.0 3.0l-3.0 3.0l-3.0 -3.0z" fill="#f0e040"/><path d="M235.8 113.8l3.0 3.0l-3.0 3.0l-3.0 -3.0z" fill="#ff10ff"/><path d="M235.8 122.2l3.0 3.0l-3.0 3.0l-3.0 -3.0z" fill="#f0e040"/><path d="M235.8 130.8l3.0 3.0l-3.0 3.0l-3.0 -3.0z" fill="#f0e040"/><path d="M235.8 139.2l3.0 3.0l-3.0 3.0l-3.0 -3.0z" fill="#ff10ff"/><path d="M235.8 147.8l3.0 3.0l-3.0 3.0l-3.0 -3.0z" fill="#ff10ff"/><path d="M235.8 156.2l3.0 3.0l-3.0 3.0l-3.0 -3.0z" fill="#f0e040"/><path d="M235.8 164.8l3.0 3.0l-3.0 3.0l-3.0 -3.0z" fill="#ff10ff"/><path d="M235.8 173.2l3.0 3.0l-3.0 3.0l-3.0 -3.0z" fill="#ff10ff"/><rect x="234.1" y="268.1" width="3.4" height="3.4" fill="#0000e0"/><rect x="234.1" y="276.6" width="3.4" height="3.4" fill="#00a0ff"/><rect x="234.1" y="285.1" width="3.4" height="3.4" fill="#0000e0"/><rect x="234.1" y="302.1" width="3.4" height="3.4" fill="#0000e0"/><rect x="234.1" y="310.6" width="3.4" height="3.4" fill="#20b0f0"/><rect x="234.4" y="395.9" width="2.6" height="2.6" fill="#e01010"/><path d="M240.0 41.9l2.6 2.6l-2.6 2.6l-2.6 -2.6z" fill="#ff10ff"/><path d="M240.0 58.5l3.0 3.0l-3.0 3.0l-3.0 -3.0z" fill="#ff10ff"/><path d="M240.0 67.0l3.0 3.0l-3.0 3.0l-3.0 -3.0z" fill="#f0e040"/><path d="M240.0 75.5l3.0 3.0l-3.0 3.0l-3.0 -3.0z" fill="#f0e040"/><path d="M240.0 84.0l3.0 3.0l-3.0 3.0l-3.0 -3.0z" fill="#f0e040"/><path d="M240.0 92.5l3.0 3.0l-3.0 3.0l-3.0 -3.0z" fill="#ff10ff"/><path d="M240.0 101.0l3.0 3.0l-3.0 3.0l-3.0 -3.0z" fill="#ff10ff"/><path d="M240.0 109.5l3.0 3.0l-3.0 3.0l-3.0 -3.0z" fill="#ff10ff"/><path d="M240.0 118.0l3.0 3.0l-3.0 3.0l-3.0 -3.0z" fill="#ff10ff"/><path d="M240.0 126.5l3.0 3.0l-3.0 3.0l-3.0 -3.0z" fill="#ff10ff"/><path d="M240.0 135.0l3.0 3.0l-3.0 3.0l-3.0 -3.0z" fill="#ff10ff"/><path d="M240.0 143.5l3.0 3.0l-3.0 3.0l-3.0 -3.0z" fill="#ff10ff"/><path d="M240.0 152.0l3.0 3.0l-3.0 3.0l-3.0 -3.0z" fill="#ff10ff"/><path d="M240.0 169.0l3.0 3.0l-3.0 3.0l-3.0 -3.0z" fill="#ff10ff"/><path d="M240.0 177.5l3.0 3.0l-3.0 3.0l-3.0 -3.0z" fill="#ff10ff"/><rect x="238.3" y="289.3" width="3.4" height="3.4" fill="#0060ff"/><rect x="238.3" y="306.3" width="3.4" height="3.4" fill="#0000e0"/><rect x="238.3" y="314.8" width="3.4" height="3.4" fill="#20b0f0"/><path d="M244.2 29.1l2.6 2.6l-2.6 2.6l-2.6 -2.6z" fill="#f0e040"/><path d="M244.2 54.2l3.0 3.0l-3.0 3.0l-3.0 -3.0z" fill="#ff10ff"/><path d="M244.2 62.8l3.0 3.0l-3.0 3.0l-3.0 -3.0z" fill="#ff10ff"/><path d="M244.2 71.2l3.0 3.0l-3.0 3.0l-3.0 -3.0z" fill="#ff10ff"/><path d="M244.2 79.8l3.0 3.0l-3.0 3.0l-3.0 -3.0z" fill="#ff10ff"/><path d="M244.2 88.2l3.0 3.0l-3.0 3.0l-3.0 -3.0z" fill="#ff10ff"/><path d="M244.2 122.2l3.0 3.0l-3.0 3.0l-3.0 -3.0z" fill="#ff10ff"/><path d="M244.2 130.8l3.0 3.0l-3.0 3.0l-3.0 -3.0z" fill="#ff10ff"/><path d="M244.2 139.2l3.0 3.0l-3.0 3.0l-3.0 -3.0z" fill="#ff10ff"/><path d="M244.2 147.8l3.0 3.0l-3.0 3.0l-3.0 -3.0z" fill="#ff10ff"/><path d="M244.2 156.2l3.0 3.0l-3.0 3.0l-3.0 -3.0z" fill="#ff10ff"/><path d="M244.2 164.8l3.0 3.0l-3.0 3.0l-3.0 -3.0z" fill="#ff10ff"/><path d="M244.2 173.2l3.0 3.0l-3.0 3.0l-3.0 -3.0z" fill="#ff10ff"/><path d="M244.2 181.8l3.0 3.0l-3.0 3.0l-3.0 -3.0z" fill="#ff10ff"/><path d="M244.2 190.2l3.0 3.0l-3.0 3.0l-3.0 -3.0z" fill="#ff10ff"/><path d="M244.2 207.7l2.6 2.6l-2.6 2.6l-2.6 -2.6z" fill="#ff10ff"/><rect x="242.6" y="251.1" width="3.4" height="3.4" fill="#0000e0"/><rect x="242.6" y="276.6" width="3.4" height="3.4" fill="#0000e0"/><rect x="242.6" y="293.6" width="3.4" height="3.4" fill="#0000e0"/><rect x="242.9" y="387.4" width="2.6" height="2.6" fill="#e01010"/><path d="M248.5 41.5l3.0 3.0l-3.0 3.0l-3.0 -3.0z" fill="#ff10ff"/><path d="M248.5 50.0l3.0 3.0l-3.0 3.0l-3.0 -3.0z" fill="#ff10ff"/><path d="M248.5 58.5l3.0 3.0l-3.0 3.0l-3.0 -3.0z" fill="#ff10ff"/><path d="M248.5 67.0l3.0 3.0l-3.0 3.0l-3.0 -3.0z" fill="#ff10ff"/><path d="M248.5 75.5l3.0 3.0l-3.0 3.0l-3.0 -3.0z" fill="#ff10ff"/><path d="M248.5 84.0l3.0 3.0l-3.0 3.0l-3.0 -3.0z" fill="#ff10ff"/><path d="M248.5 92.5l3.0 3.0l-3.0 3.0l-3.0 -3.0z" fill="#ff10ff"/><path d="M248.5 101.0l3.0 3.0l-3.0 3.0l-3.0 -3.0z" fill="#ff10ff"/><path d="M248.5 109.5l3.0 3.0l-3.0 3.0l-3.0 -3.0z" fill="#ff10ff"/><path d="M248.5 118.0l3.0 3.0l-3.0 3.0l-3.0 -3.0z" fill="#ff10ff"/><path d="M248.5 126.5l3.0 3.0l-3.0 3.0l-3.0 -3.0z" fill="#ff10ff"/><path d="M248.5 135.0l3.0 3.0l-3.0 3.0l-3.0 -3.0z" fill="#ff10ff"/><path d="M248.5 152.0l3.0 3.0l-3.0 3.0l-3.0 -3.0z" fill="#ff10ff"/><path d="M248.5 160.5l3.0 3.0l-3.0 3.0l-3.0 -3.0z" fill="#ff10ff"/><path d="M248.5 169.0l3.0 3.0l-3.0 3.0l-3.0 -3.0z" fill="#f0e040"/><path d="M248.5 177.5l3.0 3.0l-3.0 3.0l-3.0 -3.0z" fill="#f0e040"/><path d="M248.5 186.0l3.0 3.0l-3.0 3.0l-3.0 -3.0z" fill="#ff10ff"/><path d="M248.5 194.5l3.0 3.0l-3.0 3.0l-3.0 -3.0z" fill="#ff10ff"/><rect x="247.1" y="298.1" width="2.8" height="2.8" fill="#d000d0"/><rect x="247.2" y="383.2" width="2.6" height="2.6" fill="#e01010"/><path d="M252.8 20.6l2.6 2.6l-2.6 2.6l-2.6 -2.6z" fill="#f0e040"/><path d="M252.8 37.2l3.0 3.0l-3.0 3.0l-3.0 -3.0z" fill="#f0e040"/><path d="M252.8 45.8l3.0 3.0l-3.0 3.0l-3.0 -3.0z" fill="#ff10ff"/><path d="M252.8 54.2l3.0 3.0l-3.0 3.0l-3.0 -3.0z" fill="#ff10ff"/><path d="M252.8 62.8l3.0 3.0l-3.0 3.0l-3.0 -3.0z" fill="#ff10ff"/><path d="M252.8 71.2l3.0 3.0l-3.0 3.0l-3.0 -3.0z" fill="#ff10ff"/><path d="M252.8 79.8l3.0 3.0l-3.0 3.0l-3.0 -3.0z" fill="#ff10ff"/><path d="M252.8 88.2l3.0 3.0l-3.0 3.0l-3.0 -3.0z" fill="#ff10ff"/><path d="M252.8 96.8l3.0 3.0l-3.0 3.0l-3.0 -3.0z" fill="#ff10ff"/><path d="M252.8 122.2l3.0 3.0l-3.0 3.0l-3.0 -3.0z" fill="#ff10ff"/><path d="M252.8 139.2l3.0 3.0l-3.0 3.0l-3.0 -3.0z" fill="#ff10ff"/><path d="M252.8 147.8l3.0 3.0l-3.0 3.0l-3.0 -3.0z" fill="#ff10ff"/><path d="M252.8 156.2l3.0 3.0l-3.0 3.0l-3.0 -3.0z" fill="#ff10ff"/><path d="M252.8 164.8l3.0 3.0l-3.0 3.0l-3.0 -3.0z" fill="#ff10ff"/><path d="M252.8 173.2l3.0 3.0l-3.0 3.0l-3.0 -3.0z" fill="#ff10ff"/><path d="M252.8 181.8l3.0 3.0l-3.0 3.0l-3.0 -3.0z" fill="#ff10ff"/><path d="M252.8 190.2l3.0 3.0l-3.0 3.0l-3.0 -3.0z" fill="#ff10ff"/><path d="M252.8 198.8l3.0 3.0l-3.0 3.0l-3.0 -3.0z" fill="#ff10ff"/><path d="M252.8 207.7l2.6 2.6l-2.6 2.6l-2.6 -2.6z" fill="#ff10ff"/><rect x="251.3" y="344.9" width="2.8" height="2.8" fill="#d000d0"/><path d="M252.8 351.8l3.0 3.0l-3.0 3.0l-3.0 -3.0z" fill="#ff30ff"/><rect x="253.2" y="355.2" width="2" height="2" fill="#f0e040"/><rect x="251.4" y="395.9" width="2.6" height="2.6" fill="#e01010"/><path d="M257.0 7.9l2.6 2.6l-2.6 2.6l-2.6 -2.6z" fill="#f0e040"/><path d="M257.0 16.4l2.6 2.6l-2.6 2.6l-2.6 -2.6z" fill="#f0e040"/><path d="M257.0 24.5l3.0 3.0l-3.0 3.0l-3.0 -3.0z" fill="#ff10ff"/><path d="M257.0 33.0l3.0 3.0l-3.0 3.0l-3.0 -3.0z" fill="#f0e040"/><path d="M257.0 41.5l3.0 3.0l-3.0 3.0l-3.0 -3.0z" fill="#ff10ff"/><path d="M257.0 50.0l3.0 3.0l-3.0 3.0l-3.0 -3.0z" fill="#ff10ff"/><path d="M257.0 58.5l3.0 3.0l-3.0 3.0l-3.0 -3.0z" fill="#ff10ff"/><path d="M257.0 67.0l3.0 3.0l-3.0 3.0l-3.0 -3.0z" fill="#ff10ff"/><path d="M257.0 75.5l3.0 3.0l-3.0 3.0l-3.0 -3.0z" fill="#ff10ff"/><path d="M257.0 84.0l3.0 3.0l-3.0 3.0l-3.0 -3.0z" fill="#ff10ff"/><path d="M257.0 92.5l3.0 3.0l-3.0 3.0l-3.0 -3.0z" fill="#ff10ff"/><path d="M257.0 101.0l3.0 3.0l-3.0 3.0l-3.0 -3.0z" fill="#ff10ff"/><path d="M257.0 109.5l3.0 3.0l-3.0 3.0l-3.0 -3.0z" fill="#ff10ff"/><path d="M257.0 118.0l3.0 3.0l-3.0 3.0l-3.0 -3.0z" fill="#ff10ff"/><path d="M257.0 126.5l3.0 3.0l-3.0 3.0l-3.0 -3.0z" fill="#ff10ff"/><path d="M257.0 135.0l3.0 3.0l-3.0 3.0l-3.0 -3.0z" fill="#ff10ff"/><path d="M257.0 152.0l3.0 3.0l-3.0 3.0l-3.0 -3.0z" fill="#ff10ff"/><path d="M257.0 160.5l3.0 3.0l-3.0 3.0l-3.0 -3.0z" fill="#ff10ff"/><path d="M257.0 169.0l3.0 3.0l-3.0 3.0l-3.0 -3.0z" fill="#ff10ff"/><path d="M257.0 177.5l3.0 3.0l-3.0 3.0l-3.0 -3.0z" fill="#ff10ff"/><path d="M257.0 194.5l3.0 3.0l-3.0 3.0l-3.0 -3.0z" fill="#ff10ff"/><path d="M257.0 211.9l2.6 2.6l-2.6 2.6l-2.6 -2.6z" fill="#ff10ff"/><path d="M257.0 288.0l3.0 3.0l-3.0 3.0l-3.0 -3.0z" fill="#ff30ff"/><rect x="257.5" y="291.5" width="2" height="2" fill="#f0e040"/><path d="M257.0 313.5l3.0 3.0l-3.0 3.0l-3.0 -3.0z" fill="#ff30ff"/><rect x="257.5" y="317.0" width="2" height="2" fill="#f0e040"/><rect x="255.7" y="374.7" width="2.6" height="2.6" fill="#e01010"/><path d="M261.2 12.2l2.6 2.6l-2.6 2.6l-2.6 -2.6z" fill="#ff10ff"/><path d="M261.2 20.2l3.0 3.0l-3.0 3.0l-3.0 -3.0z" fill="#ff10ff"/><path d="M261.2 28.8l3.0 3.0l-3.0 3.0l-3.0 -3.0z" fill="#ff10ff"/><path d="M261.2 37.2l3.0 3.0l-3.0 3.0l-3.0 -3.0z" fill="#ff10ff"/><path d="M261.2 45.8l3.0 3.0l-3.0 3.0l-3.0 -3.0z" fill="#ff10ff"/><path d="M261.2 54.2l3.0 3.0l-3.0 3.0l-3.0 -3.0z" fill="#ff10ff"/><path d="M261.2 62.8l3.0 3.0l-3.0 3.0l-3.0 -3.0z" fill="#ff10ff"/><path d="M261.2 71.2l3.0 3.0l-3.0 3.0l-3.0 -3.0z" fill="#ff10ff"/><path d="M261.2 79.8l3.0 3.0l-3.0 3.0l-3.0 -3.0z" fill="#ff10ff"/><path d="M261.2 88.2l3.0 3.0l-3.0 3.0l-3.0 -3.0z" fill="#ff10ff"/><path d="M261.2 96.8l3.0 3.0l-3.0 3.0l-3.0 -3.0z" fill="#ff10ff"/><path d="M261.2 105.2l3.0 3.0l-3.0 3.0l-3.0 -3.0z" fill="#ff10ff"/><path d="M261.2 113.8l3.0 3.0l-3.0 3.0l-3.0 -3.0z" fill="#ff10ff"/><path d="M261.2 122.2l3.0 3.0l-3.0 3.0l-3.0 -3.0z" fill="#ff10ff"/><path d="M261.2 130.8l3.0 3.0l-3.0 3.0l-3.0 -3.0z" fill="#ff10ff"/><path d="M261.2 139.2l3.0 3.0l-3.0 3.0l-3.0 -3.0z" fill="#ff10ff"/><path d="M261.2 156.2l3.0 3.0l-3.0 3.0l-3.0 -3.0z" fill="#ff10ff"/><path d="M261.2 164.8l3.0 3.0l-3.0 3.0l-3.0 -3.0z" fill="#ff10ff"/><path d="M261.2 173.2l3.0 3.0l-3.0 3.0l-3.0 -3.0z" fill="#ff10ff"/><path d="M261.2 181.8l3.0 3.0l-3.0 3.0l-3.0 -3.0z" fill="#f0e040"/><path d="M261.2 190.2l3.0 3.0l-3.0 3.0l-3.0 -3.0z" fill="#f0e040"/><path d="M261.2 198.8l3.0 3.0l-3.0 3.0l-3.0 -3.0z" fill="#ff10ff"/><rect x="259.9" y="268.4" width="2.8" height="2.8" fill="#d000d0"/><path d="M261.2 334.8l3.0 3.0l-3.0 3.0l-3.0 -3.0z" fill="#ff30ff"/><rect x="261.8" y="338.2" width="2" height="2" fill="#f0e040"/><rect x="259.9" y="344.9" width="2.8" height="2.8" fill="#d000d0"/><path d="M265.5 -0.6l2.6 2.6l-2.6 2.6l-2.6 -2.6z" fill="#f0e040"/><path d="M265.5 16.0l3.0 3.0l-3.0 3.0l-3.0 -3.0z" fill="#ff10ff"/><path d="M265.5 24.5l3.0 3.0l-3.0 3.0l-3.0 -3.0z" fill="#ff10ff"/><path d="M265.5 33.0l3.0 3.0l-3.0 3.0l-3.0 -3.0z" fill="#ff10ff"/><path d="M265.5 41.5l3.0 3.0l-3.0 3.0l-3.0 -3.0z" fill="#ff10ff"/><path d="M265.5 50.0l3.0 3.0l-3.0 3.0l-3.0 -3.0z" fill="#ff10ff"/><path d="M265.5 58.5l3.0 3.0l-3.0 3.0l-3.0 -3.0z" fill="#ff10ff"/><path d="M265.5 67.0l3.0 3.0l-3.0 3.0l-3.0 -3.0z" fill="#ff10ff"/><path d="M265.5 75.5l3.0 3.0l-3.0 3.0l-3.0 -3.0z" fill="#ff10ff"/><path d="M265.5 84.0l3.0 3.0l-3.0 3.0l-3.0 -3.0z" fill="#ff10ff"/><path d="M265.5 92.5l3.0 3.0l-3.0 3.0l-3.0 -3.0z" fill="#ff10ff"/><path d="M265.5 101.0l3.0 3.0l-3.0 3.0l-3.0 -3.0z" fill="#ff10ff"/><path d="M265.5 109.5l3.0 3.0l-3.0 3.0l-3.0 -3.0z" fill="#ff10ff"/><path d="M265.5 118.0l3.0 3.0l-3.0 3.0l-3.0 -3.0z" fill="#ff10ff"/><path d="M265.5 126.5l3.0 3.0l-3.0 3.0l-3.0 -3.0z" fill="#ff10ff"/><path d="M265.5 135.0l3.0 3.0l-3.0 3.0l-3.0 -3.0z" fill="#ff10ff"/><path d="M265.5 143.5l3.0 3.0l-3.0 3.0l-3.0 -3.0z" fill="#ff10ff"/><path d="M265.5 152.0l3.0 3.0l-3.0 3.0l-3.0 -3.0z" fill="#ff10ff"/><path d="M265.5 160.5l3.0 3.0l-3.0 3.0l-3.0 -3.0z" fill="#ff10ff"/><path d="M265.5 169.0l3.0 3.0l-3.0 3.0l-3.0 -3.0z" fill="#ff10ff"/><path d="M265.5 177.5l3.0 3.0l-3.0 3.0l-3.0 -3.0z" fill="#ff10ff"/><path d="M265.5 186.0l3.0 3.0l-3.0 3.0l-3.0 -3.0z" fill="#ff10ff"/><path d="M265.5 194.5l3.0 3.0l-3.0 3.0l-3.0 -3.0z" fill="#ff10ff"/><path d="M265.5 203.0l3.0 3.0l-3.0 3.0l-3.0 -3.0z" fill="#ff10ff"/><path d="M265.5 211.9l2.6 2.6l-2.6 2.6l-2.6 -2.6z" fill="#ff10ff"/><rect x="264.1" y="255.6" width="2.8" height="2.8" fill="#d000d0"/><rect x="264.1" y="298.1" width="2.8" height="2.8" fill="#d000d0"/><rect x="264.1" y="306.6" width="2.8" height="2.8" fill="#d000d0"/><rect x="264.1" y="315.1" width="2.8" height="2.8" fill="#d000d0"/><rect x="264.2" y="391.7" width="2.6" height="2.6" fill="#e01010"/><rect x="264.2" y="400.2" width="2.6" height="2.6" fill="#e01010"/><path d="M269.8 12.2l2.6 2.6l-2.6 2.6l-2.6 -2.6z" fill="#ff10ff"/><path d="M269.8 28.8l3.0 3.0l-3.0 3.0l-3.0 -3.0z" fill="#ff10ff"/><path d="M269.8 37.2l3.0 3.0l-3.0 3.0l-3.0 -3.0z" fill="#ff10ff"/><path d="M269.8 45.8l3.0 3.0l-3.0 3.0l-3.0 -3.0z" fill="#ff10ff"/><path d="M269.8 54.2l3.0 3.0l-3.0 3.0l-3.0 -3.0z" fill="#ff10ff"/><path d="M269.8 62.8l3.0 3.0l-3.0 3.0l-3.0 -3.0z" fill="#ff10ff"/><path d="M269.8 71.2l3.0 3.0l-3.0 3.0l-3.0 -3.0z" fill="#ff10ff"/><path d="M269.8 79.8l3.0 3.0l-3.0 3.0l-3.0 -3.0z" fill="#ff10ff"/><path d="M269.8 96.8l3.0 3.0l-3.0 3.0l-3.0 -3.0z" fill="#ff10ff"/><path d="M269.8 105.2l3.0 3.0l-3.0 3.0l-3.0 -3.0z" fill="#ff10ff"/><path d="M269.8 113.8l3.0 3.0l-3.0 3.0l-3.0 -3.0z" fill="#ff10ff"/><path d="M269.8 130.8l3.0 3.0l-3.0 3.0l-3.0 -3.0z" fill="#ff10ff"/><path d="M269.8 139.2l3.0 3.0l-3.0 3.0l-3.0 -3.0z" fill="#ff10ff"/><path d="M269.8 147.8l3.0 3.0l-3.0 3.0l-3.0 -3.0z" fill="#ff10ff"/><path d="M269.8 156.2l3.0 3.0l-3.0 3.0l-3.0 -3.0z" fill="#ff10ff"/><path d="M269.8 164.8l3.0 3.0l-3.0 3.0l-3.0 -3.0z" fill="#ff10ff"/><path d="M269.8 173.2l3.0 3.0l-3.0 3.0l-3.0 -3.0z" fill="#ff10ff"/><path d="M269.8 190.2l3.0 3.0l-3.0 3.0l-3.0 -3.0z" fill="#ff10ff"/><path d="M269.8 198.8l3.0 3.0l-3.0 3.0l-3.0 -3.0z" fill="#ff10ff"/><rect x="268.4" y="302.4" width="2.8" height="2.8" fill="#d000d0"/><path d="M269.8 326.2l3.0 3.0l-3.0 3.0l-3.0 -3.0z" fill="#ff30ff"/><rect x="270.2" y="329.8" width="2" height="2" fill="#f0e040"/><path d="M274.0 7.9l2.6 2.6l-2.6 2.6l-2.6 -2.6z" fill="#ff10ff"/><path d="M274.0 16.0l3.0 3.0l-3.0 3.0l-3.0 -3.0z" fill="#f0e040"/><path d="M274.0 24.5l3.0 3.0l-3.0 3.0l-3.0 -3.0z" fill="#ff10ff"/><path d="M274.0 33.0l3.0 3.0l-3.0 3.0l-3.0 -3.0z" fill="#ff10ff"/><path d="M274.0 41.5l3.0 3.0l-3.0 3.0l-3.0 -3.0z" fill="#ff10ff"/><path d="M274.0 50.0l3.0 3.0l-3.0 3.0l-3.0 -3.0z" fill="#ff10ff"/><path d="M274.0 58.5l3.0 3.0l-3.0 3.0l-3.0 -3.0z" fill="#ff10ff"/><path d="M274.0 67.0l3.0 3.0l-3.0 3.0l-3.0 -3.0z" fill="#ff10ff"/><path d="M274.0 75.5l3.0 3.0l-3.0 3.0l-3.0 -3.0z" fill="#ff10ff"/><path d="M274.0 84.0l3.0 3.0l-3.0 3.0l-3.0 -3.0z" fill="#ff10ff"/><path d="M274.0 101.0l3.0 3.0l-3.0 3.0l-3.0 -3.0z" fill="#ff10ff"/><path d="M274.0 109.5l3.0 3.0l-3.0 3.0l-3.0 -3.0z" fill="#ff10ff"/><path d="M274.0 118.0l3.0 3.0l-3.0 3.0l-3.0 -3.0z" fill="#ff10ff"/><path d="M274.0 126.5l3.0 3.0l-3.0 3.0l-3.0 -3.0z" fill="#ff10ff"/><path d="M274.0 135.0l3.0 3.0l-3.0 3.0l-3.0 -3.0z" fill="#ff10ff"/><path d="M274.0 152.0l3.0 3.0l-3.0 3.0l-3.0 -3.0z" fill="#ff10ff"/><path d="M274.0 160.5l3.0 3.0l-3.0 3.0l-3.0 -3.0z" fill="#ff10ff"/><path d="M274.0 177.5l3.0 3.0l-3.0 3.0l-3.0 -3.0z" fill="#ff10ff"/><path d="M274.0 186.0l3.0 3.0l-3.0 3.0l-3.0 -3.0z" fill="#f0e040"/><path d="M274.0 194.5l3.0 3.0l-3.0 3.0l-3.0 -3.0z" fill="#ff10ff"/><path d="M274.0 211.9l2.6 2.6l-2.6 2.6l-2.6 -2.6z" fill="#f0e040"/><rect x="272.8" y="238.8" width="2.4" height="2.4" fill="#e01010"/><rect x="272.6" y="298.1" width="2.8" height="2.8" fill="#d000d0"/><path d="M274.0 313.5l3.0 3.0l-3.0 3.0l-3.0 -3.0z" fill="#ff30ff"/><rect x="274.5" y="317.0" width="2" height="2" fill="#f0e040"/><path d="M274.0 322.0l3.0 3.0l-3.0 3.0l-3.0 -3.0z" fill="#ff30ff"/><rect x="274.5" y="325.5" width="2" height="2" fill="#f0e040"/><path d="M278.2 11.8l3.0 3.0l-3.0 3.0l-3.0 -3.0z" fill="#ff10ff"/><path d="M278.2 20.2l3.0 3.0l-3.0 3.0l-3.0 -3.0z" fill="#ff10ff"/><path d="M278.2 28.8l3.0 3.0l-3.0 3.0l-3.0 -3.0z" fill="#ff10ff"/><path d="M278.2 37.2l3.0 3.0l-3.0 3.0l-3.0 -3.0z" fill="#ff10ff"/><path d="M278.2 45.8l3.0 3.0l-3.0 3.0l-3.0 -3.0z" fill="#ff10ff"/><path d="M278.2 62.8l3.0 3.0l-3.0 3.0l-3.0 -3.0z" fill="#ff10ff"/><path d="M278.2 79.8l3.0 3.0l-3.0 3.0l-3.0 -3.0z" fill="#ff10ff"/><path d="M278.2 88.2l3.0 3.0l-3.0 3.0l-3.0 -3.0z" fill="#ff10ff"/><path d="M278.2 96.8l3.0 3.0l-3.0 3.0l-3.0 -3.0z" fill="#ff10ff"/><path d="M278.2 105.2l3.0 3.0l-3.0 3.0l-3.0 -3.0z" fill="#ff10ff"/><path d="M278.2 113.8l3.0 3.0l-3.0 3.0l-3.0 -3.0z" fill="#ff10ff"/><path d="M278.2 122.2l3.0 3.0l-3.0 3.0l-3.0 -3.0z" fill="#ff10ff"/><path d="M278.2 130.8l3.0 3.0l-3.0 3.0l-3.0 -3.0z" fill="#ff10ff"/><path d="M278.2 147.8l3.0 3.0l-3.0 3.0l-3.0 -3.0z" fill="#ff10ff"/><path d="M278.2 156.2l3.0 3.0l-3.0 3.0l-3.0 -3.0z" fill="#ff10ff"/><path d="M278.2 164.8l3.0 3.0l-3.0 3.0l-3.0 -3.0z" fill="#ff10ff"/><path d="M278.2 173.2l3.0 3.0l-3.0 3.0l-3.0 -3.0z" fill="#ff10ff"/><path d="M278.2 181.8l3.0 3.0l-3.0 3.0l-3.0 -3.0z" fill="#ff10ff"/><path d="M278.2 190.2l3.0 3.0l-3.0 3.0l-3.0 -3.0z" fill="#ff10ff"/><path d="M278.2 198.8l3.0 3.0l-3.0 3.0l-3.0 -3.0z" fill="#ff10ff"/><path d="M278.2 207.7l2.6 2.6l-2.6 2.6l-2.6 -2.6z" fill="#f0e040"/><path d="M278.2 216.2l2.6 2.6l-2.6 2.6l-2.6 -2.6z" fill="#f0e040"/><rect x="276.9" y="302.4" width="2.8" height="2.8" fill="#d000d0"/><path d="M278.2 326.2l3.0 3.0l-3.0 3.0l-3.0 -3.0z" fill="#ff30ff"/><rect x="278.8" y="329.8" width="2" height="2" fill="#f0e040"/><path d="M278.2 343.2l3.0 3.0l-3.0 3.0l-3.0 -3.0z" fill="#ff30ff"/><rect x="278.8" y="346.8" width="2" height="2" fill="#f0e040"/><rect x="276.9" y="353.4" width="2.8" height="2.8" fill="#d000d0"/><path d="M278.2 360.2l3.0 3.0l-3.0 3.0l-3.0 -3.0z" fill="#ff30ff"/><rect x="278.8" y="363.8" width="2" height="2" fill="#f0e040"/><path d="M282.5 7.5l3.0 3.0l-3.0 3.0l-3.0 -3.0z" fill="#ff10ff"/><path d="M282.5 16.0l3.0 3.0l-3.0 3.0l-3.0 -3.0z" fill="#f0e040"/><path d="M282.5 24.5l3.0 3.0l-3.0 3.0l-3.0 -3.0z" fill="#ff10ff"/><path d="M282.5 33.0l3.0 3.0l-3.0 3.0l-3.0 -3.0z" fill="#ff10ff"/><path d="M282.5 41.5l3.0 3.0l-3.0 3.0l-3.0 -3.0z" fill="#ff10ff"/><path d="M282.5 50.0l3.0 3.0l-3.0 3.0l-3.0 -3.0z" fill="#ff10ff"/><path d="M282.5 67.0l3.0 3.0l-3.0 3.0l-3.0 -3.0z" fill="#ff10ff"/><path d="M282.5 75.5l3.0 3.0l-3.0 3.0l-3.0 -3.0z" fill="#ff10ff"/><path d="M282.5 84.0l3.0 3.0l-3.0 3.0l-3.0 -3.0z" fill="#ff10ff"/><path d="M282.5 101.0l3.0 3.0l-3.0 3.0l-3.0 -3.0z" fill="#ff10ff"/><path d="M282.5 109.5l3.0 3.0l-3.0 3.0l-3.0 -3.0z" fill="#ff10ff"/><path d="M282.5 118.0l3.0 3.0l-3.0 3.0l-3.0 -3.0z" fill="#ff10ff"/><path d="M282.5 126.5l3.0 3.0l-3.0 3.0l-3.0 -3.0z" fill="#ff10ff"/><path d="M282.5 135.0l3.0 3.0l-3.0 3.0l-3.0 -3.0z" fill="#ff10ff"/><path d="M282.5 143.5l3.0 3.0l-3.0 3.0l-3.0 -3.0z" fill="#ff10ff"/><path d="M282.5 152.0l3.0 3.0l-3.0 3.0l-3.0 -3.0z" fill="#ff10ff"/><path d="M282.5 160.5l3.0 3.0l-3.0 3.0l-3.0 -3.0z" fill="#ff10ff"/><path d="M282.5 169.0l3.0 3.0l-3.0 3.0l-3.0 -3.0z" fill="#ff10ff"/><path d="M282.5 177.5l3.0 3.0l-3.0 3.0l-3.0 -3.0z" fill="#ff10ff"/><path d="M282.5 186.0l3.0 3.0l-3.0 3.0l-3.0 -3.0z" fill="#ff10ff"/><path d="M282.5 194.5l3.0 3.0l-3.0 3.0l-3.0 -3.0z" fill="#ff10ff"/><path d="M282.5 245.5l3.0 3.0l-3.0 3.0l-3.0 -3.0z" fill="#ff30ff"/><rect x="283.0" y="249.0" width="2" height="2" fill="#f0e040"/><path d="M282.5 254.0l3.0 3.0l-3.0 3.0l-3.0 -3.0z" fill="#ff30ff"/><rect x="283.0" y="257.5" width="2" height="2" fill="#f0e040"/><rect x="281.1" y="289.6" width="2.8" height="2.8" fill="#d000d0"/><rect x="281.1" y="306.6" width="2.8" height="2.8" fill="#d000d0"/><path d="M282.5 313.5l3.0 3.0l-3.0 3.0l-3.0 -3.0z" fill="#ff30ff"/><rect x="283.0" y="317.0" width="2" height="2" fill="#f0e040"/><rect x="281.1" y="340.6" width="2.8" height="2.8" fill="#d000d0"/><path d="M282.5 381.5l3.0 3.0l-3.0 3.0l-3.0 -3.0z" fill="#ff30ff"/><rect x="283.0" y="385.0" width="2" height="2" fill="#f0e040"/><path d="M286.8 11.8l3.0 3.0l-3.0 3.0l-3.0 -3.0z" fill="#ff10ff"/><path d="M286.8 28.8l3.0 3.0l-3.0 3.0l-3.0 -3.0z" fill="#ff10ff"/><path d="M286.8 37.2l3.0 3.0l-3.0 3.0l-3.0 -3.0z" fill="#ff10ff"/><path d="M286.8 45.8l3.0 3.0l-3.0 3.0l-3.0 -3.0z" fill="#ff10ff"/><path d="M286.8 54.2l3.0 3.0l-3.0 3.0l-3.0 -3.0z" fill="#ff10ff"/><path d="M286.8 62.8l3.0 3.0l-3.0 3.0l-3.0 -3.0z" fill="#ff10ff"/><path d="M286.8 71.2l3.0 3.0l-3.0 3.0l-3.0 -3.0z" fill="#ff10ff"/><path d="M286.8 79.8l3.0 3.0l-3.0 3.0l-3.0 -3.0z" fill="#ff10ff"/><path d="M286.8 88.2l3.0 3.0l-3.0 3.0l-3.0 -3.0z" fill="#ff10ff"/><path d="M286.8 96.8l3.0 3.0l-3.0 3.0l-3.0 -3.0z" fill="#ff10ff"/><path d="M286.8 105.2l3.0 3.0l-3.0 3.0l-3.0 -3.0z" fill="#ff10ff"/><path d="M286.8 113.8l3.0 3.0l-3.0 3.0l-3.0 -3.0z" fill="#ff10ff"/><path d="M286.8 122.2l3.0 3.0l-3.0 3.0l-3.0 -3.0z" fill="#ff10ff"/><path d="M286.8 130.8l3.0 3.0l-3.0 3.0l-3.0 -3.0z" fill="#ff10ff"/><path d="M286.8 139.2l3.0 3.0l-3.0 3.0l-3.0 -3.0z" fill="#ff10ff"/><path d="M286.8 147.8l3.0 3.0l-3.0 3.0l-3.0 -3.0z" fill="#ff10ff"/><path d="M286.8 156.2l3.0 3.0l-3.0 3.0l-3.0 -3.0z" fill="#ff10ff"/><path d="M286.8 164.8l3.0 3.0l-3.0 3.0l-3.0 -3.0z" fill="#ff10ff"/><path d="M286.8 173.2l3.0 3.0l-3.0 3.0l-3.0 -3.0z" fill="#ff10ff"/><path d="M286.8 181.8l3.0 3.0l-3.0 3.0l-3.0 -3.0z" fill="#ff10ff"/><path d="M286.8 199.2l2.6 2.6l-2.6 2.6l-2.6 -2.6z" fill="#ff10ff"/><path d="M286.8 241.2l3.0 3.0l-3.0 3.0l-3.0 -3.0z" fill="#ff30ff"/><rect x="287.2" y="244.8" width="2" height="2" fill="#f0e040"/><rect x="285.4" y="285.4" width="2.8" height="2.8" fill="#d000d0"/><path d="M286.8 292.2l3.0 3.0l-3.0 3.0l-3.0 -3.0z" fill="#ff30ff"/><rect x="287.2" y="295.8" width="2" height="2" fill="#f0e040"/><rect x="285.4" y="319.4" width="2.8" height="2.8" fill="#d000d0"/><path d="M286.8 326.2l3.0 3.0l-3.0 3.0l-3.0 -3.0z" fill="#ff30ff"/><rect x="287.2" y="329.8" width="2" height="2" fill="#f0e040"/><rect x="285.4" y="336.4" width="2.8" height="2.8" fill="#d000d0"/><path d="M291.0 7.5l3.0 3.0l-3.0 3.0l-3.0 -3.0z" fill="#ff10ff"/><path d="M291.0 16.0l3.0 3.0l-3.0 3.0l-3.0 -3.0z" fill="#ff10ff"/><path d="M291.0 24.5l3.0 3.0l-3.0 3.0l-3.0 -3.0z" fill="#ff10ff"/><path d="M291.0 41.5l3.0 3.0l-3.0 3.0l-3.0 -3.0z" fill="#ff10ff"/><path d="M291.0 50.0l3.0 3.0l-3.0 3.0l-3.0 -3.0z" fill="#ff10ff"/><path d="M291.0 58.5l3.0 3.0l-3.0 3.0l-3.0 -3.0z" fill="#ff10ff"/><path d="M291.0 67.0l3.0 3.0l-3.0 3.0l-3.0 -3.0z" fill="#ff10ff"/><path d="M291.0 75.5l3.0 3.0l-3.0 3.0l-3.0 -3.0z" fill="#ff10ff"/><path d="M291.0 84.0l3.0 3.0l-3.0 3.0l-3.0 -3.0z" fill="#ff10ff"/><path d="M291.0 92.5l3.0 3.0l-3.0 3.0l-3.0 -3.0z" fill="#ff10ff"/><path d="M291.0 101.0l3.0 3.0l-3.0 3.0l-3.0 -3.0z" fill="#ff10ff"/><path d="M291.0 109.5l3.0 3.0l-3.0 3.0l-3.0 -3.0z" fill="#ff10ff"/><path d="M291.0 118.0l3.0 3.0l-3.0 3.0l-3.0 -3.0z" fill="#ff10ff"/><path d="M291.0 126.5l3.0 3.0l-3.0 3.0l-3.0 -3.0z" fill="#ff10ff"/><path d="M291.0 135.0l3.0 3.0l-3.0 3.0l-3.0 -3.0z" fill="#ff10ff"/><path d="M291.0 143.5l3.0 3.0l-3.0 3.0l-3.0 -3.0z" fill="#ff10ff"/><path d="M291.0 152.0l3.0 3.0l-3.0 3.0l-3.0 -3.0z" fill="#ff10ff"/><path d="M291.0 160.5l3.0 3.0l-3.0 3.0l-3.0 -3.0z" fill="#ff10ff"/><path d="M291.0 169.0l3.0 3.0l-3.0 3.0l-3.0 -3.0z" fill="#ff10ff"/><path d="M291.0 177.5l3.0 3.0l-3.0 3.0l-3.0 -3.0z" fill="#ff10ff"/><path d="M291.0 186.0l3.0 3.0l-3.0 3.0l-3.0 -3.0z" fill="#ff10ff"/><path d="M291.0 271.0l3.0 3.0l-3.0 3.0l-3.0 -3.0z" fill="#ff30ff"/><rect x="291.5" y="274.5" width="2" height="2" fill="#f0e040"/><rect x="289.6" y="281.1" width="2.8" height="2.8" fill="#d000d0"/><rect x="289.6" y="289.6" width="2.8" height="2.8" fill="#d000d0"/><path d="M291.0 296.5l3.0 3.0l-3.0 3.0l-3.0 -3.0z" fill="#ff30ff"/><rect x="291.5" y="300.0" width="2" height="2" fill="#f0e040"/><rect x="289.6" y="332.1" width="2.8" height="2.8" fill="#d000d0"/><rect x="289.6" y="340.6" width="2.8" height="2.8" fill="#d000d0"/><path d="M295.2 3.6l2.6 2.6l-2.6 2.6l-2.6 -2.6z" fill="#f0e040"/><path d="M295.2 11.8l3.0 3.0l-3.0 3.0l-3.0 -3.0z" fill="#ff10ff"/><path d="M295.2 20.2l3.0 3.0l-3.0 3.0l-3.0 -3.0z" fill="#ff10ff"/><path d="M295.2 28.8l3.0 3.0l-3.0 3.0l-3.0 -3.0z" fill="#ff10ff"/><path d="M295.2 37.2l3.0 3.0l-3.0 3.0l-3.0 -3.0z" fill="#ff10ff"/><path d="M295.2 45.8l3.0 3.0l-3.0 3.0l-3.0 -3.0z" fill="#ff10ff"/><path d="M295.2 54.2l3.0 3.0l-3.0 3.0l-3.0 -3.0z" fill="#ff10ff"/><path d="M295.2 62.8l3.0 3.0l-3.0 3.0l-3.0 -3.0z" fill="#ff10ff"/><path d="M295.2 71.2l3.0 3.0l-3.0 3.0l-3.0 -3.0z" fill="#ff10ff"/><path d="M295.2 79.8l3.0 3.0l-3.0 3.0l-3.0 -3.0z" fill="#ff10ff"/><path d="M295.2 88.2l3.0 3.0l-3.0 3.0l-3.0 -3.0z" fill="#ff10ff"/><path d="M295.2 96.8l3.0 3.0l-3.0 3.0l-3.0 -3.0z" fill="#ff10ff"/><path d="M295.2 105.2l3.0 3.0l-3.0 3.0l-3.0 -3.0z" fill="#ff10ff"/><path d="M295.2 113.8l3.0 3.0l-3.0 3.0l-3.0 -3.0z" fill="#ff10ff"/><path d="M295.2 122.2l3.0 3.0l-3.0 3.0l-3.0 -3.0z" fill="#ff10ff"/><path d="M295.2 139.2l3.0 3.0l-3.0 3.0l-3.0 -3.0z" fill="#ff10ff"/><path d="M295.2 156.2l3.0 3.0l-3.0 3.0l-3.0 -3.0z" fill="#ff10ff"/><path d="M295.2 164.8l3.0 3.0l-3.0 3.0l-3.0 -3.0z" fill="#ff10ff"/><path d="M295.2 173.2l3.0 3.0l-3.0 3.0l-3.0 -3.0z" fill="#f0e040"/><path d="M295.2 181.8l3.0 3.0l-3.0 3.0l-3.0 -3.0z" fill="#f0e040"/><path d="M295.2 190.7l2.6 2.6l-2.6 2.6l-2.6 -2.6z" fill="#f0e040"/><path d="M295.2 266.8l3.0 3.0l-3.0 3.0l-3.0 -3.0z" fill="#ff30ff"/><rect x="295.8" y="270.2" width="2" height="2" fill="#f0e040"/><rect x="293.9" y="285.4" width="2.8" height="2.8" fill="#d000d0"/><rect x="293.9" y="293.9" width="2.8" height="2.8" fill="#d000d0"/><rect x="293.9" y="302.4" width="2.8" height="2.8" fill="#d000d0"/><rect x="293.9" y="310.9" width="2.8" height="2.8" fill="#d000d0"/><rect x="293.9" y="319.4" width="2.8" height="2.8" fill="#d000d0"/><rect x="293.9" y="361.9" width="2.8" height="2.8" fill="#d000d0"/><path d="M299.5 16.0l3.0 3.0l-3.0 3.0l-3.0 -3.0z" fill="#ff10ff"/><path d="M299.5 24.5l3.0 3.0l-3.0 3.0l-3.0 -3.0z" fill="#ff10ff"/><path d="M299.5 33.0l3.0 3.0l-3.0 3.0l-3.0 -3.0z" fill="#ff10ff"/><path d="M299.5 41.5l3.0 3.0l-3.0 3.0l-3.0 -3.0z" fill="#ff10ff"/><path d="M299.5 50.0l3.0 3.0l-3.0 3.0l-3.0 -3.0z" fill="#ff10ff"/><path d="M299.5 67.0l3.0 3.0l-3.0 3.0l-3.0 -3.0z" fill="#ff10ff"/><path d="M299.5 75.5l3.0 3.0l-3.0 3.0l-3.0 -3.0z" fill="#ff10ff"/><path d="M299.5 84.0l3.0 3.0l-3.0 3.0l-3.0 -3.0z" fill="#ff10ff"/><path d="M299.5 92.5l3.0 3.0l-3.0 3.0l-3.0 -3.0z" fill="#ff10ff"/><path d="M299.5 101.0l3.0 3.0l-3.0 3.0l-3.0 -3.0z" fill="#ff10ff"/><path d="M299.5 109.5l3.0 3.0l-3.0 3.0l-3.0 -3.0z" fill="#ff10ff"/><path d="M299.5 118.0l3.0 3.0l-3.0 3.0l-3.0 -3.0z" fill="#ff10ff"/><path d="M299.5 126.5l3.0 3.0l-3.0 3.0l-3.0 -3.0z" fill="#ff10ff"/><path d="M299.5 135.0l3.0 3.0l-3.0 3.0l-3.0 -3.0z" fill="#ff10ff"/><path d="M299.5 143.5l3.0 3.0l-3.0 3.0l-3.0 -3.0z" fill="#ff10ff"/><path d="M299.5 152.0l3.0 3.0l-3.0 3.0l-3.0 -3.0z" fill="#ff10ff"/><path d="M299.5 169.0l3.0 3.0l-3.0 3.0l-3.0 -3.0z" fill="#ff10ff"/><path d="M299.5 177.5l3.0 3.0l-3.0 3.0l-3.0 -3.0z" fill="#ff10ff"/><path d="M299.5 194.9l2.6 2.6l-2.6 2.6l-2.6 -2.6z" fill="#f0e040"/><path d="M299.5 245.5l3.0 3.0l-3.0 3.0l-3.0 -3.0z" fill="#ff30ff"/><rect x="300.0" y="249.0" width="2" height="2" fill="#f0e040"/><path d="M299.5 296.5l3.0 3.0l-3.0 3.0l-3.0 -3.0z" fill="#ff30ff"/><rect x="300.0" y="300.0" width="2" height="2" fill="#f0e040"/><path d="M299.5 313.5l3.0 3.0l-3.0 3.0l-3.0 -3.0z" fill="#ff30ff"/><rect x="300.0" y="317.0" width="2" height="2" fill="#f0e040"/><path d="M299.5 322.0l3.0 3.0l-3.0 3.0l-3.0 -3.0z" fill="#ff30ff"/><rect x="300.0" y="325.5" width="2" height="2" fill="#f0e040"/><rect x="298.1" y="340.6" width="2.8" height="2.8" fill="#d000d0"/><path d="M303.8 11.8l3.0 3.0l-3.0 3.0l-3.0 -3.0z" fill="#ff10ff"/><path d="M303.8 20.2l3.0 3.0l-3.0 3.0l-3.0 -3.0z" fill="#ff10ff"/><path d="M303.8 37.2l3.0 3.0l-3.0 3.0l-3.0 -3.0z" fill="#ff10ff"/><path d="M303.8 45.8l3.0 3.0l-3.0 3.0l-3.0 -3.0z" fill="#ff10ff"/><path d="M303.8 54.2l3.0 3.0l-3.0 3.0l-3.0 -3.0z" fill="#ff10ff"/><path d="M303.8 62.8l3.0 3.0l-3.0 3.0l-3.0 -3.0z" fill="#ff10ff"/><path d="M303.8 71.2l3.0 3.0l-3.0 3.0l-3.0 -3.0z" fill="#ff10ff"/><path d="M303.8 79.8l3.0 3.0l-3.0 3.0l-3.0 -3.0z" fill="#ff10ff"/><path d="M303.8 88.2l3.0 3.0l-3.0 3.0l-3.0 -3.0z" fill="#ff10ff"/><path d="M303.8 96.8l3.0 3.0l-3.0 3.0l-3.0 -3.0z" fill="#ff10ff"/><path d="M303.8 105.2l3.0 3.0l-3.0 3.0l-3.0 -3.0z" fill="#ff10ff"/><path d="M303.8 113.8l3.0 3.0l-3.0 3.0l-3.0 -3.0z" fill="#ff10ff"/><path d="M303.8 130.8l3.0 3.0l-3.0 3.0l-3.0 -3.0z" fill="#ff10ff"/><path d="M303.8 139.2l3.0 3.0l-3.0 3.0l-3.0 -3.0z" fill="#ff10ff"/><path d="M303.8 147.8l3.0 3.0l-3.0 3.0l-3.0 -3.0z" fill="#ff10ff"/><path d="M303.8 156.2l3.0 3.0l-3.0 3.0l-3.0 -3.0z" fill="#ff10ff"/><path d="M303.8 164.8l3.0 3.0l-3.0 3.0l-3.0 -3.0z" fill="#ff10ff"/><path d="M303.8 173.2l3.0 3.0l-3.0 3.0l-3.0 -3.0z" fill="#ff10ff"/><path d="M303.8 190.7l2.6 2.6l-2.6 2.6l-2.6 -2.6z" fill="#f0e040"/><rect x="302.4" y="251.3" width="2.8" height="2.8" fill="#d000d0"/><rect x="302.4" y="285.4" width="2.8" height="2.8" fill="#d000d0"/><rect x="302.4" y="310.9" width="2.8" height="2.8" fill="#d000d0"/><path d="M303.8 334.8l3.0 3.0l-3.0 3.0l-3.0 -3.0z" fill="#ff30ff"/><rect x="304.2" y="338.2" width="2" height="2" fill="#f0e040"/><rect x="302.4" y="344.9" width="2.8" height="2.8" fill="#d000d0"/><rect x="302.4" y="395.9" width="2.6" height="2.6" fill="#e01010"/><path d="M308.0 16.0l3.0 3.0l-3.0 3.0l-3.0 -3.0z" fill="#ff10ff"/><path d="M308.0 24.5l3.0 3.0l-3.0 3.0l-3.0 -3.0z" fill="#ff10ff"/><path d="M308.0 41.5l3.0 3.0l-3.0 3.0l-3.0 -3.0z" fill="#ff10ff"/><path d="M308.0 50.0l3.0 3.0l-3.0 3.0l-3.0 -3.0z" fill="#ff10ff"/><path d="M308.0 58.5l3.0 3.0l-3.0 3.0l-3.0 -3.0z" fill="#ff10ff"/><path d="M308.0 67.0l3.0 3.0l-3.0 3.0l-3.0 -3.0z" fill="#ff10ff"/><path d="M308.0 75.5l3.0 3.0l-3.0 3.0l-3.0 -3.0z" fill="#ff10ff"/><path d="M308.0 101.0l3.0 3.0l-3.0 3.0l-3.0 -3.0z" fill="#ff10ff"/><path d="M308.0 109.5l3.0 3.0l-3.0 3.0l-3.0 -3.0z" fill="#ff10ff"/><path d="M308.0 118.0l3.0 3.0l-3.0 3.0l-3.0 -3.0z" fill="#ff10ff"/><path d="M308.0 126.5l3.0 3.0l-3.0 3.0l-3.0 -3.0z" fill="#ff10ff"/><path d="M308.0 135.0l3.0 3.0l-3.0 3.0l-3.0 -3.0z" fill="#ff10ff"/><path d="M308.0 143.5l3.0 3.0l-3.0 3.0l-3.0 -3.0z" fill="#ff10ff"/><path d="M308.0 152.0l3.0 3.0l-3.0 3.0l-3.0 -3.0z" fill="#ff10ff"/><path d="M308.0 160.5l3.0 3.0l-3.0 3.0l-3.0 -3.0z" fill="#ff10ff"/><path d="M308.0 169.0l3.0 3.0l-3.0 3.0l-3.0 -3.0z" fill="#ff10ff"/><path d="M308.0 177.9l2.6 2.6l-2.6 2.6l-2.6 -2.6z" fill="#ff10ff"/><path d="M308.0 228.5l3.0 3.0l-3.0 3.0l-3.0 -3.0z" fill="#ff30ff"/><rect x="308.5" y="232.0" width="2" height="2" fill="#f0e040"/><rect x="306.6" y="238.6" width="2.8" height="2.8" fill="#d000d0"/><rect x="306.6" y="272.6" width="2.8" height="2.8" fill="#d000d0"/><path d="M308.0 313.5l3.0 3.0l-3.0 3.0l-3.0 -3.0z" fill="#ff30ff"/><rect x="308.5" y="317.0" width="2" height="2" fill="#f0e040"/><path d="M308.0 322.0l3.0 3.0l-3.0 3.0l-3.0 -3.0z" fill="#ff30ff"/><rect x="308.5" y="325.5" width="2" height="2" fill="#f0e040"/><rect x="306.6" y="332.1" width="2.8" height="2.8" fill="#d000d0"/><rect x="306.6" y="340.6" width="2.8" height="2.8" fill="#d000d0"/><path d="M308.0 347.5l3.0 3.0l-3.0 3.0l-3.0 -3.0z" fill="#ff30ff"/><rect x="308.5" y="351.0" width="2" height="2" fill="#f0e040"/><rect x="306.6" y="366.1" width="2.8" height="2.8" fill="#d000d0"/><path d="M312.2 28.8l3.0 3.0l-3.0 3.0l-3.0 -3.0z" fill="#f0e040"/><path d="M312.2 37.2l3.0 3.0l-3.0 3.0l-3.0 -3.0z" fill="#f0e040"/><path d="M312.2 45.8l3.0 3.0l-3.0 3.0l-3.0 -3.0z" fill="#f0e040"/><path d="M312.2 54.2l3.0 3.0l-3.0 3.0l-3.0 -3.0z" fill="#ff10ff"/><path d="M312.2 62.8l3.0 3.0l-3.0 3.0l-3.0 -3.0z" fill="#ff10ff"/><path d="M312.2 71.2l3.0 3.0l-3.0 3.0l-3.0 -3.0z" fill="#ff10ff"/><path d="M312.2 79.8l3.0 3.0l-3.0 3.0l-3.0 -3.0z" fill="#ff10ff"/><path d="M312.2 88.2l3.0 3.0l-3.0 3.0l-3.0 -3.0z" fill="#ff10ff"/><path d="M312.2 96.8l3.0 3.0l-3.0 3.0l-3.0 -3.0z" fill="#ff10ff"/><path d="M312.2 105.2l3.0 3.0l-3.0 3.0l-3.0 -3.0z" fill="#ff10ff"/><path d="M312.2 122.2l3.0 3.0l-3.0 3.0l-3.0 -3.0z" fill="#ff10ff"/><path d="M312.2 130.8l3.0 3.0l-3.0 3.0l-3.0 -3.0z" fill="#ff10ff"/><path d="M312.2 147.8l3.0 3.0l-3.0 3.0l-3.0 -3.0z" fill="#f0e040"/><path d="M312.2 156.2l3.0 3.0l-3.0 3.0l-3.0 -3.0z" fill="#ff10ff"/><path d="M312.2 165.2l2.6 2.6l-2.6 2.6l-2.6 -2.6z" fill="#ff10ff"/><path d="M312.2 173.7l2.6 2.6l-2.6 2.6l-2.6 -2.6z" fill="#ff10ff"/><path d="M312.2 182.2l2.6 2.6l-2.6 2.6l-2.6 -2.6z" fill="#ff10ff"/><rect x="310.9" y="268.4" width="2.8" height="2.8" fill="#d000d0"/><rect x="310.9" y="276.9" width="2.8" height="2.8" fill="#d000d0"/><path d="M312.2 283.8l3.0 3.0l-3.0 3.0l-3.0 -3.0z" fill="#ff30ff"/><rect x="312.8" y="287.2" width="2" height="2" fill="#f0e040"/><rect x="310.9" y="293.9" width="2.8" height="2.8" fill="#d000d0"/><path d="M312.2 300.8l3.0 3.0l-3.0 3.0l-3.0 -3.0z" fill="#ff30ff"/><rect x="312.8" y="304.2" width="2" height="2" fill="#f0e040"/><rect x="310.9" y="310.9" width="2.8" height="2.8" fill="#d000d0"/><path d="M312.2 326.2l3.0 3.0l-3.0 3.0l-3.0 -3.0z" fill="#ff30ff"/><rect x="312.8" y="329.8" width="2" height="2" fill="#f0e040"/><rect x="310.9" y="336.4" width="2.8" height="2.8" fill="#d000d0"/><rect x="310.9" y="361.9" width="2.8" height="2.8" fill="#d000d0"/><path d="M316.5 7.9l2.6 2.6l-2.6 2.6l-2.6 -2.6z" fill="#ff10ff"/><path d="M316.5 33.0l3.0 3.0l-3.0 3.0l-3.0 -3.0z" fill="#f0e040"/><path d="M316.5 41.5l3.0 3.0l-3.0 3.0l-3.0 -3.0z" fill="#ff10ff"/><path d="M316.5 50.0l3.0 3.0l-3.0 3.0l-3.0 -3.0z" fill="#ff10ff"/><path d="M316.5 58.5l3.0 3.0l-3.0 3.0l-3.0 -3.0z" fill="#ff10ff"/><path d="M316.5 67.0l3.0 3.0l-3.0 3.0l-3.0 -3.0z" fill="#f0e040"/><path d="M316.5 75.5l3.0 3.0l-3.0 3.0l-3.0 -3.0z" fill="#ff10ff"/><path d="M316.5 84.0l3.0 3.0l-3.0 3.0l-3.0 -3.0z" fill="#ff10ff"/><path d="M316.5 92.5l3.0 3.0l-3.0 3.0l-3.0 -3.0z" fill="#ff10ff"/><path d="M316.5 101.0l3.0 3.0l-3.0 3.0l-3.0 -3.0z" fill="#ff10ff"/><path d="M316.5 109.5l3.0 3.0l-3.0 3.0l-3.0 -3.0z" fill="#ff10ff"/><path d="M316.5 118.0l3.0 3.0l-3.0 3.0l-3.0 -3.0z" fill="#ff10ff"/><path d="M316.5 126.5l3.0 3.0l-3.0 3.0l-3.0 -3.0z" fill="#ff10ff"/><path d="M316.5 135.0l3.0 3.0l-3.0 3.0l-3.0 -3.0z" fill="#ff10ff"/><path d="M316.5 143.5l3.0 3.0l-3.0 3.0l-3.0 -3.0z" fill="#ff10ff"/><path d="M316.5 152.0l3.0 3.0l-3.0 3.0l-3.0 -3.0z" fill="#ff10ff"/><path d="M316.5 169.4l2.6 2.6l-2.6 2.6l-2.6 -2.6z" fill="#f0e040"/><path d="M316.5 279.5l3.0 3.0l-3.0 3.0l-3.0 -3.0z" fill="#ff30ff"/><rect x="317.0" y="283.0" width="2" height="2" fill="#f0e040"/><rect x="315.1" y="289.6" width="2.8" height="2.8" fill="#d000d0"/><rect x="315.1" y="306.6" width="2.8" height="2.8" fill="#d000d0"/><rect x="315.1" y="357.6" width="2.8" height="2.8" fill="#d000d0"/><rect x="315.1" y="366.1" width="2.8" height="2.8" fill="#d000d0"/><path d="M320.8 20.6l2.6 2.6l-2.6 2.6l-2.6 -2.6z" fill="#ff10ff"/><path d="M320.8 37.2l3.0 3.0l-3.0 3.0l-3.0 -3.0z" fill="#ff10ff"/><path d="M320.8 45.8l3.0 3.0l-3.0 3.0l-3.0 -3.0z" fill="#ff10ff"/><path d="M320.8 54.2l3.0 3.0l-3.0 3.0l-3.0 -3.0z" fill="#ff10ff"/><path d="M320.8 62.8l3.0 3.0l-3.0 3.0l-3.0 -3.0z" fill="#ff10ff"/><path d="M320.8 79.8l3.0 3.0l-3.0 3.0l-3.0 -3.0z" fill="#ff10ff"/><path d="M320.8 88.2l3.0 3.0l-3.0 3.0l-3.0 -3.0z" fill="#ff10ff"/><path d="M320.8 96.8l3.0 3.0l-3.0 3.0l-3.0 -3.0z" fill="#ff10ff"/><path d="M320.8 105.2l3.0 3.0l-3.0 3.0l-3.0 -3.0z" fill="#ff10ff"/><path d="M320.8 122.2l3.0 3.0l-3.0 3.0l-3.0 -3.0z" fill="#ff10ff"/><path d="M320.8 130.8l3.0 3.0l-3.0 3.0l-3.0 -3.0z" fill="#ff10ff"/><path d="M320.8 139.2l3.0 3.0l-3.0 3.0l-3.0 -3.0z" fill="#ff10ff"/><path d="M320.8 249.8l3.0 3.0l-3.0 3.0l-3.0 -3.0z" fill="#ff30ff"/><rect x="321.2" y="253.2" width="2" height="2" fill="#f0e040"/><path d="M320.8 283.8l3.0 3.0l-3.0 3.0l-3.0 -3.0z" fill="#ff30ff"/><rect x="321.2" y="287.2" width="2" height="2" fill="#f0e040"/><rect x="319.4" y="336.4" width="2.8" height="2.8" fill="#d000d0"/><rect x="319.4" y="361.9" width="2.8" height="2.8" fill="#d000d0"/><path d="M320.8 368.8l3.0 3.0l-3.0 3.0l-3.0 -3.0z" fill="#ff30ff"/><rect x="321.2" y="372.2" width="2" height="2" fill="#f0e040"/><rect x="319.4" y="395.9" width="2.6" height="2.6" fill="#e01010"/><path d="M325.0 50.0l3.0 3.0l-3.0 3.0l-3.0 -3.0z" fill="#f0e040"/><path d="M325.0 58.5l3.0 3.0l-3.0 3.0l-3.0 -3.0z" fill="#f0e040"/><path d="M325.0 75.5l3.0 3.0l-3.0 3.0l-3.0 -3.0z" fill="#ff10ff"/><path d="M325.0 92.5l3.0 3.0l-3.0 3.0l-3.0 -3.0z" fill="#ff10ff"/><path d="M325.0 101.0l3.0 3.0l-3.0 3.0l-3.0 -3.0z" fill="#ff10ff"/><path d="M325.0 109.5l3.0 3.0l-3.0 3.0l-3.0 -3.0z" fill="#f0e040"/><path d="M325.0 118.0l3.0 3.0l-3.0 3.0l-3.0 -3.0z" fill="#ff10ff"/><path d="M325.0 152.4l2.6 2.6l-2.6 2.6l-2.6 -2.6z" fill="#ff10ff"/><path d="M325.0 254.0l3.0 3.0l-3.0 3.0l-3.0 -3.0z" fill="#ff30ff"/><rect x="325.5" y="257.5" width="2" height="2" fill="#f0e040"/><path d="M325.0 262.5l3.0 3.0l-3.0 3.0l-3.0 -3.0z" fill="#ff30ff"/><rect x="325.5" y="266.0" width="2" height="2" fill="#f0e040"/><path d="M325.0 296.5l3.0 3.0l-3.0 3.0l-3.0 -3.0z" fill="#ff30ff"/><rect x="325.5" y="300.0" width="2" height="2" fill="#f0e040"/><rect x="323.6" y="306.6" width="2.8" height="2.8" fill="#d000d0"/><path d="M325.0 339.0l3.0 3.0l-3.0 3.0l-3.0 -3.0z" fill="#ff30ff"/><rect x="325.5" y="342.5" width="2" height="2" fill="#f0e040"/><path d="M325.0 347.5l3.0 3.0l-3.0 3.0l-3.0 -3.0z" fill="#ff30ff"/><rect x="325.5" y="351.0" width="2" height="2" fill="#f0e040"/><path d="M325.0 356.0l3.0 3.0l-3.0 3.0l-3.0 -3.0z" fill="#ff30ff"/><rect x="325.5" y="359.5" width="2" height="2" fill="#f0e040"/><rect x="323.6" y="366.1" width="2.8" height="2.8" fill="#d000d0"/><path d="M325.0 373.0l3.0 3.0l-3.0 3.0l-3.0 -3.0z" fill="#ff30ff"/><rect x="325.5" y="376.5" width="2" height="2" fill="#f0e040"/><rect x="323.6" y="383.1" width="2.8" height="2.8" fill="#d000d0"/><path d="M329.2 37.6l2.6 2.6l-2.6 2.6l-2.6 -2.6z" fill="#ff10ff"/><path d="M329.2 54.6l2.6 2.6l-2.6 2.6l-2.6 -2.6z" fill="#ff10ff"/><path d="M329.2 79.8l3.0 3.0l-3.0 3.0l-3.0 -3.0z" fill="#ff10ff"/><path d="M329.2 105.7l2.6 2.6l-2.6 2.6l-2.6 -2.6z" fill="#ff10ff"/><path d="M329.2 139.7l2.6 2.6l-2.6 2.6l-2.6 -2.6z" fill="#f0e040"/><path d="M329.2 241.2l3.0 3.0l-3.0 3.0l-3.0 -3.0z" fill="#ff30ff"/><rect x="329.8" y="244.8" width="2" height="2" fill="#f0e040"/><path d="M329.2 258.2l3.0 3.0l-3.0 3.0l-3.0 -3.0z" fill="#ff30ff"/><rect x="329.8" y="261.8" width="2" height="2" fill="#f0e040"/><rect x="327.9" y="268.4" width="2.8" height="2.8" fill="#d000d0"/><path d="M329.2 292.2l3.0 3.0l-3.0 3.0l-3.0 -3.0z" fill="#ff30ff"/><rect x="329.8" y="295.8" width="2" height="2" fill="#f0e040"/><path d="M329.2 309.2l3.0 3.0l-3.0 3.0l-3.0 -3.0z" fill="#ff30ff"/><rect x="329.8" y="312.8" width="2" height="2" fill="#f0e040"/><rect x="327.9" y="319.4" width="2.8" height="2.8" fill="#d000d0"/><path d="M329.2 326.2l3.0 3.0l-3.0 3.0l-3.0 -3.0z" fill="#ff30ff"/><rect x="329.8" y="329.8" width="2" height="2" fill="#f0e040"/><rect x="327.9" y="370.4" width="2.8" height="2.8" fill="#d000d0"/><rect x="327.9" y="378.9" width="2.8" height="2.8" fill="#d000d0"/><path d="M333.5 41.9l2.6 2.6l-2.6 2.6l-2.6 -2.6z" fill="#ff10ff"/><path d="M333.5 67.4l2.6 2.6l-2.6 2.6l-2.6 -2.6z" fill="#f0e040"/><path d="M333.5 75.9l2.6 2.6l-2.6 2.6l-2.6 -2.6z" fill="#ff10ff"/><path d="M333.5 84.4l2.6 2.6l-2.6 2.6l-2.6 -2.6z" fill="#ff10ff"/><path d="M333.5 92.9l2.6 2.6l-2.6 2.6l-2.6 -2.6z" fill="#ff10ff"/><path d="M333.5 118.4l2.6 2.6l-2.6 2.6l-2.6 -2.6z" fill="#ff10ff"/><rect x="332.1" y="255.6" width="2.8" height="2.8" fill="#d000d0"/><path d="M333.5 262.5l3.0 3.0l-3.0 3.0l-3.0 -3.0z" fill="#ff30ff"/><rect x="334.0" y="266.0" width="2" height="2" fill="#f0e040"/><rect x="332.1" y="289.6" width="2.8" height="2.8" fill="#d000d0"/><path d="M333.5 305.0l3.0 3.0l-3.0 3.0l-3.0 -3.0z" fill="#ff30ff"/><rect x="334.0" y="308.5" width="2" height="2" fill="#f0e040"/><path d="M333.5 322.0l3.0 3.0l-3.0 3.0l-3.0 -3.0z" fill="#ff30ff"/><rect x="334.0" y="325.5" width="2" height="2" fill="#f0e040"/><path d="M333.5 330.5l3.0 3.0l-3.0 3.0l-3.0 -3.0z" fill="#ff30ff"/><rect x="334.0" y="334.0" width="2" height="2" fill="#f0e040"/><rect x="332.1" y="340.6" width="2.8" height="2.8" fill="#d000d0"/><path d="M333.5 356.0l3.0 3.0l-3.0 3.0l-3.0 -3.0z" fill="#ff30ff"/><rect x="334.0" y="359.5" width="2" height="2" fill="#f0e040"/><path d="M333.5 373.0l3.0 3.0l-3.0 3.0l-3.0 -3.0z" fill="#ff30ff"/><rect x="334.0" y="376.5" width="2" height="2" fill="#f0e040"/><path d="M337.8 80.2l2.6 2.6l-2.6 2.6l-2.6 -2.6z" fill="#ff10ff"/><path d="M337.8 292.2l3.0 3.0l-3.0 3.0l-3.0 -3.0z" fill="#ff30ff"/><rect x="338.2" y="295.8" width="2" height="2" fill="#f0e040"/><path d="M337.8 300.8l3.0 3.0l-3.0 3.0l-3.0 -3.0z" fill="#ff30ff"/><rect x="338.2" y="304.2" width="2" height="2" fill="#f0e040"/><path d="M337.8 343.2l3.0 3.0l-3.0 3.0l-3.0 -3.0z" fill="#ff30ff"/><rect x="338.2" y="346.8" width="2" height="2" fill="#f0e040"/><path d="M337.8 351.8l3.0 3.0l-3.0 3.0l-3.0 -3.0z" fill="#ff30ff"/><rect x="338.2" y="355.2" width="2" height="2" fill="#f0e040"/><path d="M342.0 237.0l3.0 3.0l-3.0 3.0l-3.0 -3.0z" fill="#ff30ff"/><rect x="342.5" y="240.5" width="2" height="2" fill="#f0e040"/><path d="M342.0 254.0l3.0 3.0l-3.0 3.0l-3.0 -3.0z" fill="#ff30ff"/><rect x="342.5" y="257.5" width="2" height="2" fill="#f0e040"/><rect x="340.6" y="264.1" width="2.8" height="2.8" fill="#d000d0"/><path d="M342.0 288.0l3.0 3.0l-3.0 3.0l-3.0 -3.0z" fill="#ff30ff"/><rect x="342.5" y="291.5" width="2" height="2" fill="#f0e040"/><path d="M342.0 305.0l3.0 3.0l-3.0 3.0l-3.0 -3.0z" fill="#ff30ff"/><rect x="342.5" y="308.5" width="2" height="2" fill="#f0e040"/><rect x="340.6" y="349.1" width="2.8" height="2.8" fill="#d000d0"/><path d="M346.2 300.8l3.0 3.0l-3.0 3.0l-3.0 -3.0z" fill="#ff30ff"/><rect x="346.8" y="304.2" width="2" height="2" fill="#f0e040"/><rect x="344.9" y="327.9" width="2.8" height="2.8" fill="#d000d0"/><path d="M346.2 343.2l3.0 3.0l-3.0 3.0l-3.0 -3.0z" fill="#ff30ff"/><rect x="346.8" y="346.8" width="2" height="2" fill="#f0e040"/><rect x="344.9" y="370.4" width="2.8" height="2.8" fill="#d000d0"/><rect x="349.1" y="272.6" width="2.8" height="2.8" fill="#d000d0"/><rect x="349.1" y="315.1" width="2.8" height="2.8" fill="#d000d0"/><path d="M350.5 339.0l3.0 3.0l-3.0 3.0l-3.0 -3.0z" fill="#ff30ff"/><rect x="351.0" y="342.5" width="2" height="2" fill="#f0e040"/><rect x="349.1" y="349.1" width="2.8" height="2.8" fill="#d000d0"/><rect x="353.4" y="285.4" width="2.8" height="2.8" fill="#d000d0"/><rect x="353.4" y="293.9" width="2.8" height="2.8" fill="#d000d0"/><rect x="353.4" y="353.4" width="2.8" height="2.8" fill="#d000d0"/><path d="M354.8 360.2l3.0 3.0l-3.0 3.0l-3.0 -3.0z" fill="#ff30ff"/><rect x="355.2" y="363.8" width="2" height="2" fill="#f0e040"/><rect x="357.6" y="247.1" width="2.8" height="2.8" fill="#d000d0"/><rect x="357.6" y="366.1" width="2.8" height="2.8" fill="#d000d0"/><rect x="361.9" y="242.8" width="2.8" height="2.8" fill="#d000d0"/><rect x="361.9" y="259.9" width="2.8" height="2.8" fill="#d000d0"/><rect x="361.9" y="268.4" width="2.8" height="2.8" fill="#d000d0"/><path d="M363.2 292.2l3.0 3.0l-3.0 3.0l-3.0 -3.0z" fill="#ff30ff"/><rect x="363.8" y="295.8" width="2" height="2" fill="#f0e040"/><path d="M363.2 309.2l3.0 3.0l-3.0 3.0l-3.0 -3.0z" fill="#ff30ff"/><rect x="363.8" y="312.8" width="2" height="2" fill="#f0e040"/><rect x="361.9" y="319.4" width="2.8" height="2.8" fill="#d000d0"/><rect x="361.9" y="344.9" width="2.8" height="2.8" fill="#d000d0"/><rect x="361.9" y="353.4" width="2.8" height="2.8" fill="#d000d0"/><rect x="361.9" y="361.9" width="2.8" height="2.8" fill="#d000d0"/><rect x="366.1" y="264.1" width="2.8" height="2.8" fill="#d000d0"/><path d="M367.5 313.5l3.0 3.0l-3.0 3.0l-3.0 -3.0z" fill="#ff30ff"/><rect x="368.0" y="317.0" width="2" height="2" fill="#f0e040"/><path d="M371.8 292.2l3.0 3.0l-3.0 3.0l-3.0 -3.0z" fill="#ff30ff"/><rect x="372.2" y="295.8" width="2" height="2" fill="#f0e040"/><rect x="370.4" y="327.9" width="2.8" height="2.8" fill="#d000d0"/><path d="M376.0 330.5l3.0 3.0l-3.0 3.0l-3.0 -3.0z" fill="#ff30ff"/><rect x="376.5" y="334.0" width="2" height="2" fill="#f0e040"/><path d="M376.0 339.0l3.0 3.0l-3.0 3.0l-3.0 -3.0z" fill="#ff30ff"/><rect x="376.5" y="342.5" width="2" height="2" fill="#f0e040"/><rect x="374.6" y="357.6" width="2.8" height="2.8" fill="#d000d0"/><rect x="374.6" y="366.1" width="2.8" height="2.8" fill="#d000d0"/><path d="M380.2 292.2l3.0 3.0l-3.0 3.0l-3.0 -3.0z" fill="#ff30ff"/><rect x="380.8" y="295.8" width="2" height="2" fill="#f0e040"/><rect x="378.9" y="310.9" width="2.8" height="2.8" fill="#d000d0"/><path d="M380.2 326.2l3.0 3.0l-3.0 3.0l-3.0 -3.0z" fill="#ff30ff"/><rect x="380.8" y="329.8" width="2" height="2" fill="#f0e040"/><rect x="378.9" y="353.4" width="2.8" height="2.8" fill="#d000d0"/><rect x="383.2" y="102.7" width="2.6" height="2.6" fill="#f0b020"/><path d="M384.5 288.0l3.0 3.0l-3.0 3.0l-3.0 -3.0z" fill="#ff30ff"/><rect x="385.0" y="291.5" width="2" height="2" fill="#f0e040"/><path d="M388.8 334.8l3.0 3.0l-3.0 3.0l-3.0 -3.0z" fill="#ff30ff"/><rect x="389.2" y="338.2" width="2" height="2" fill="#f0e040"/><rect x="391.7" y="85.7" width="2.6" height="2.6" fill="#f0b020"/><rect x="391.7" y="94.2" width="2.6" height="2.6" fill="#e01010"/><rect x="391.7" y="111.2" width="2.6" height="2.6" fill="#e01010"/><rect x="391.7" y="119.7" width="2.6" height="2.6" fill="#e01010"/><rect x="391.6" y="306.6" width="2.8" height="2.8" fill="#d000d0"/><rect x="395.9" y="293.9" width="2.8" height="2.8" fill="#d000d0"/><rect x="400.2" y="68.7" width="2.6" height="2.6" fill="#e01010"/><rect x="400.2" y="94.2" width="2.6" height="2.6" fill="#e01010"/><rect x="400.2" y="119.7" width="2.6" height="2.6" fill="#f0b020"/><rect x="400.2" y="128.2" width="2.6" height="2.6" fill="#e01010"/><path d="M401.5 322.0l3.0 3.0l-3.0 3.0l-3.0 -3.0z" fill="#ff30ff"/><rect x="402.0" y="325.5" width="2" height="2" fill="#f0e040"/><path d="M401.5 330.5l3.0 3.0l-3.0 3.0l-3.0 -3.0z" fill="#ff30ff"/><rect x="402.0" y="334.0" width="2" height="2" fill="#f0e040"/><rect x="408.7" y="68.7" width="2.6" height="2.6" fill="#f0b020"/><rect x="408.7" y="119.7" width="2.6" height="2.6" fill="#e01010"/><rect x="408.7" y="145.2" width="2.6" height="2.6" fill="#e01010"/><rect x="417.2" y="85.7" width="2.6" height="2.6" fill="#e01010"/><rect x="417.2" y="119.7" width="2.6" height="2.6" fill="#e01010"/><rect x="417.2" y="128.2" width="2.6" height="2.6" fill="#e01010"/><rect x="425.7" y="85.7" width="2.6" height="2.6" fill="#e01010"/><rect x="425.7" y="102.7" width="2.6" height="2.6" fill="#e01010"/><rect x="425.7" y="145.2" width="2.6" height="2.6" fill="#e01010"/><rect x="434.2" y="77.2" width="2.6" height="2.6" fill="#f0b020"/><rect x="442.7" y="111.2" width="2.6" height="2.6" fill="#e01010"/><rect x="442.8" y="145.3" width="2.4" height="2.4" fill="#c000c0"/><rect x="451.3" y="187.8" width="2.4" height="2.4" fill="#c000c0"/><rect x="493.8" y="289.8" width="2.4" height="2.4" fill="#c000c0"/><path d="M263 117.5H294L280 146.5z" fill="#800080"/></svg>
<span class="t" style="left:936.00px;top:585.77px;font-size:23.9px;color:#1c1c1c;transform:scaleX(0.9845);transform-origin:0 0;">PLT Histogram (1)</span>
<span class="t" style="left:942.00px;top:613.87px;font-size:28.5px;color:#333;transform:scaleX(1.0300);transform-origin:0 0;">PLT Histogram</span>
<div style="left:938px;top:648.5px;width:546.7px;height:273.0px;background:#000"></div>
<svg style="left:938px;top:648.5px" width="547" height="273"><polyline points="24,273.0 40.799999999999955,220.70000000000005 52.799999999999955,156.70000000000005 56.799999999999955,131.10000000000002 60,111.89999999999998 68,97.5 76,78.29999999999995 84,60.700000000000045 90.40000000000009,55.89999999999998 93.59999999999991,57.5 98.40000000000009,61.5 106.40000000000009,65.5 111.20000000000005,67.10000000000002 117.59999999999991,78.29999999999995 122.40000000000009,97.5 125.59999999999991,108.70000000000005 130.4000000000001,127.89999999999998 135.20000000000005,137.5 144.79999999999995,137.5 151.20000000000005,145.5 159.20000000000005,164.70000000000005 164,182.29999999999995 173.5999999999999,191.89999999999998 182,197.5 206,219.89999999999998 218,227.10000000000002 230,235.5 249.20000000000005,243.89999999999998 263.5999999999999,243.89999999999998 273.20000000000005,249.89999999999998 283,249.89999999999998 285,247.5 290,255.89999999999998 297.20000000000005,251.5 300.79999999999995,263.1 302,273.5" fill="none" stroke="#18e4e8" stroke-width="2.4" stroke-linejoin="round"/><polyline points="24,273.0 40.799999999999955,220.70000000000005 55.200000000000045,143.89999999999998 64.79999999999995,113.5 76,87.89999999999998 82.39999999999998,82.29999999999995 90.40000000000009,77.5 96.79999999999995,78.29999999999995 104.79999999999995,83.89999999999998 114.40000000000009,94.29999999999995 124,108.70000000000005 133.5999999999999,118.29999999999995 141.5999999999999,135.89999999999998 149.5999999999999,143.89999999999998 156,156.70000000000005 165.5999999999999,172.70000000000005 173.5999999999999,182.29999999999995 182,192.29999999999995 206,215.5 215.5999999999999,223.5 230,231.5 251.5999999999999,240.5 261.20000000000005,243.5 285.20000000000005,253.5 300.79999999999995,264.29999999999995 311.5999999999999,264.29999999999995 315.20000000000005,267.9 336.9000000000001,267.9 340.5,272.1 354.79999999999995,272.1" fill="none" stroke="#18e4e8" stroke-width="2.4" stroke-linejoin="round"/></svg>
<span class="t" style="left:936.00px;top:942.02px;font-size:23.6px;color:#1c1c1c;transform:scaleX(0.9834);transform-origin:0 0;">RBC Histogram (1)</span>
<span class="t" style="left:937.00px;top:970.87px;font-size:28.5px;color:#333;transform:scaleX(1.0155);transform-origin:0 0;">RBC Histogram</span>
<div style="left:934px;top:1004.5px;width:546.5px;height:231.5px;background:#000"></div>
<svg style="left:934px;top:1004.5px" width="547" height="232"><polyline points="79.70000000000005,232.5 82,208.79999999999995 86,179.5 90,144.79999999999995 94,110.20000000000005 97.29999999999995,88.79999999999995 100,72.79999999999995 104,63.5 110.70000000000005,57.5 114.70000000000005,62.200000000000045 117.29999999999995,75.5 121.29999999999995,107.5 125.29999999999995,139.5 130.70000000000005,168.79999999999995 136,195.5 144.5,232.5" fill="none" stroke="#e24a4a" stroke-width="2.1" stroke-linejoin="round"/></svg>
<div style="left:915px;top:1236px;width:585px;height:12px;background:#f0f0f0"></div>
<div style="left:917px;top:1248px;width:583px;height:52px;background:linear-gradient(#fbfbfb,#f3f3f3 40%,#ececec);border-top-left-radius:4px"></div>
<div style="left:925.5px;top:1258.5px;width:3.0px;height:3.0px;background:#a9a9a9;border-radius:1px"></div>
<div style="left:925.5px;top:1267.5px;width:3.0px;height:3.0px;background:#a9a9a9;border-radius:1px"></div>
<div style="left:925.5px;top:1276.5px;width:3.0px;height:3.0px;background:#a9a9a9;border-radius:1px"></div>
<div style="left:925.5px;top:1285.0px;width:3.0px;height:3.0px;background:#a9a9a9;border-radius:1px"></div>
<div style="left:925.5px;top:1293.5px;width:3.0px;height:3.0px;background:#a9a9a9;border-radius:1px"></div>
<span class="t" style="left:945.60px;top:1261.64px;font-size:27px;color:#0c0c2c;transform:scaleX(0.8883);transform-origin:0 0;">Previous Results</span>
<div style="left:915px;top:1300px;width:585px;height:158px;background:#f6f6f6"></div>
<div style="left:915px;top:1302px;width:2.5px;height:155px;background:#a7a7a7"></div>
<div style="left:929px;top:1315.6px;width:571px;height:3.4px;background:#6e6e6e"></div>
<div style="left:929px;top:1315.6px;width:3.4px;height:124.4px;background:#6e6e6e"></div>
<div style="left:932.4px;top:1319px;width:567.6px;height:36px;background:#efefef"></div>
<div style="left:932.4px;top:1355px;width:567.6px;height:4px;background:#6e6e6e"></div>
<div style="left:932.4px;top:1359px;width:567.6px;height:81px;background:#fff"></div>
<div style="left:967px;top:1319px;width:3.5px;height:36px;background:#6e6e6e"></div>
<div style="left:1199.5px;top:1319px;width:3.5px;height:36px;background:#6e6e6e"></div>
<div style="left:1413px;top:1319px;width:3.5px;height:36px;background:#6e6e6e"></div>
<span class="t" style="left:976.00px;top:1326.84px;font-size:25px;color:#262626;transform:scaleX(0.9205);transform-origin:0 0;">Test Name</span>
<svg style="left:1093px;top:1331px" width="20" height="18"><path d="M1.4 16.8L10.6 1.8L18 16.8z" fill="#fff"/><path d="M1.8 16L8.6 3.6" stroke="#8e8e8e" stroke-width="2.3" stroke-linecap="round"/></svg>
<span class="t" style="left:1208.00px;top:1326.84px;font-size:25px;color:#262626;transform:scaleX(0.8889);transform-origin:0 0;">Result</span>
<span class="t" style="left:1422.00px;top:1326.84px;font-size:25px;color:#262626;transform:scaleX(0.9100);transform-origin:0 0;">Result Date</span>
<div style="left:917.5px;top:1440px;width:582.5px;height:14.5px;background:#f0f0f0"></div>
<div style="left:915px;top:1454.5px;width:585px;height:3.0px;background:#a7a7a7"></div>
</body></html>
